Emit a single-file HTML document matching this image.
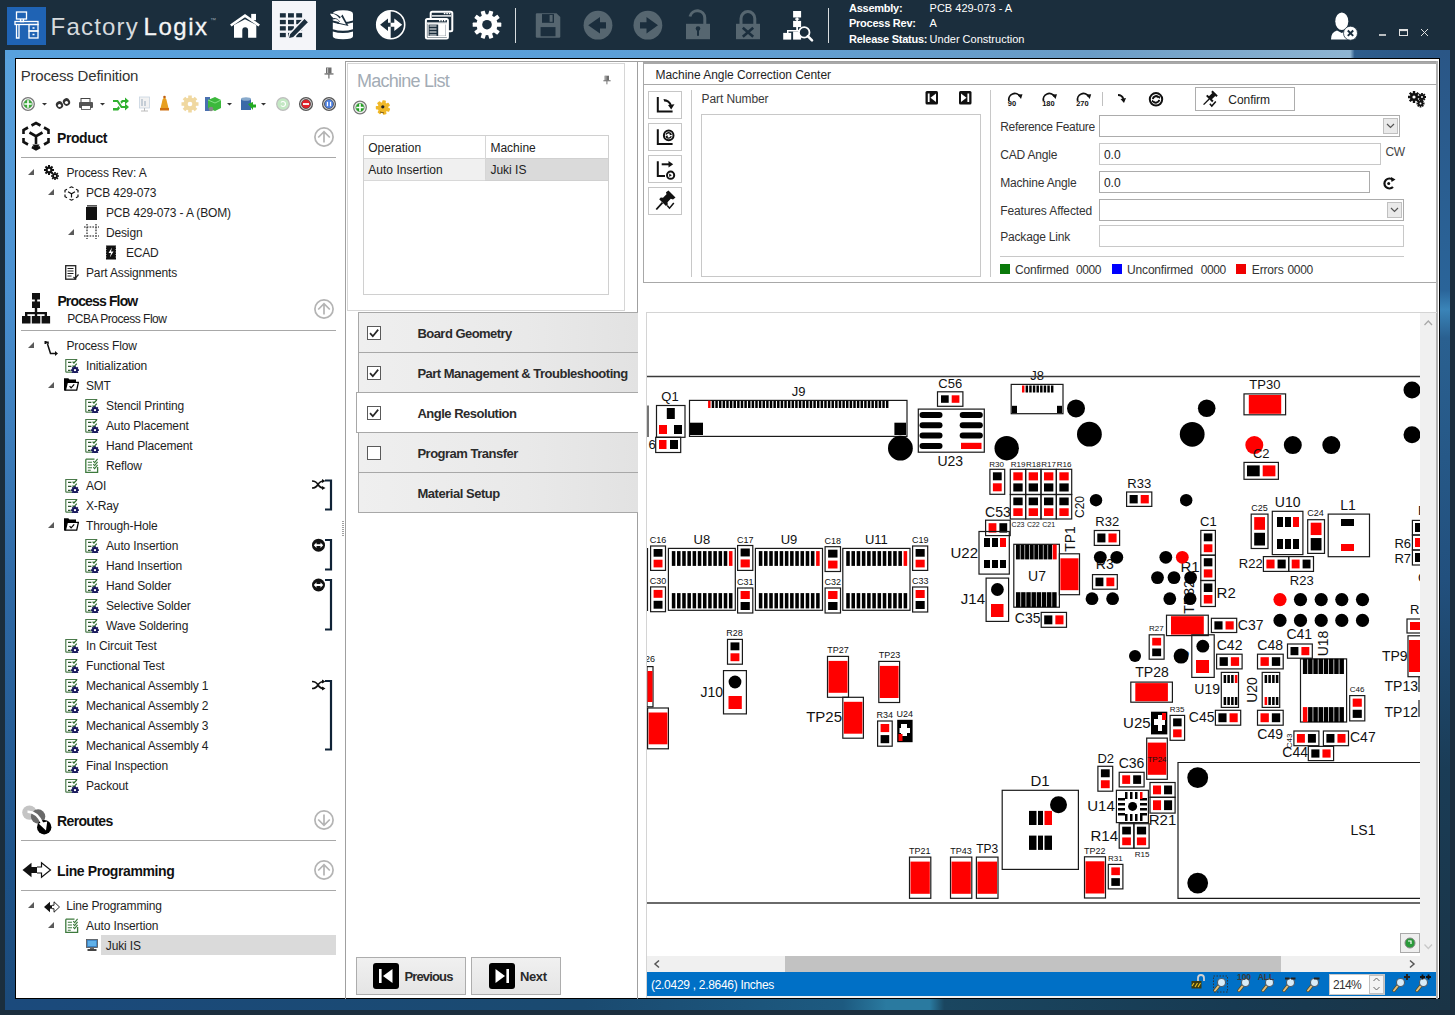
<!DOCTYPE html>
<html><head><meta charset="utf-8"><title>FactoryLogix</title>
<style>
*{margin:0;padding:0;box-sizing:content-box}
html,body{width:1455px;height:1015px;overflow:hidden}
body{background:#1b2e3d;position:relative;font-family:"Liberation Sans",sans-serif;color:#000}
.a{position:absolute}
.t{position:absolute;white-space:nowrap}
svg.a{overflow:visible}
</style></head><body>
<svg width="0" height="0" style="position:absolute">
<defs>
<symbol id="step" viewBox="0 0 14 15">
<path d="M0.8 14.2 V1.5 H12.3 M0.8 14.2 H7" fill="none" stroke="#4a7a4a" stroke-width="1.2"/>
<path d="M3 4.4h3.4M3 8.4h3.4M3 12.4h2.6" stroke="#2e5a2e" stroke-width="1.2"/>
<path d="M7.6 3.6 L8.9 5 L11.8 1.8 M7.6 7.5 L8.9 8.9 L11.8 5.7" fill="none" stroke="#2e6a2e" stroke-width="1.2"/>
<g transform="translate(10 12.1)" fill="#14145a"><rect x="-0.9" y="-3.9" width="1.8" height="2" transform="rotate(0)"/><rect x="-0.9" y="-3.9" width="1.8" height="2" transform="rotate(45)"/><rect x="-0.9" y="-3.9" width="1.8" height="2" transform="rotate(90)"/><rect x="-0.9" y="-3.9" width="1.8" height="2" transform="rotate(135)"/><rect x="-0.9" y="-3.9" width="1.8" height="2" transform="rotate(180)"/><rect x="-0.9" y="-3.9" width="1.8" height="2" transform="rotate(225)"/><rect x="-0.9" y="-3.9" width="1.8" height="2" transform="rotate(270)"/><rect x="-0.9" y="-3.9" width="1.8" height="2" transform="rotate(315)"/><circle r="2.8"/></g><circle cx="10" cy="12.1" r="1.2" fill="#fff"/>
</symbol>
<symbol id="stepng" viewBox="0 0 14 15">
<path d="M0.8 1.2 H9.5 M0.8 1.2 V14.3 H12.6 V9" fill="none" stroke="#3d7a3d" stroke-width="1.3"/>
<path d="M2.8 4.2h4.2M2.8 7h4.2M2.8 9.8h4.2M2.8 12.3h3" stroke="#3d7a3d" stroke-width="1.1"/>
<path d="M8.2 3.2 L9.6 4.6 L12.6 0.8 M8.2 6.2 L9.6 7.6 L12.6 3.8 M8.2 9.2 L9.6 10.6 L12.6 6.8" fill="none" stroke="#3d7a3d" stroke-width="1.1"/>
</symbol>
<symbol id="tri" viewBox="0 0 6 6"><path d="M6 0 V6 H0Z" fill="#5a5a5a"/></symbol>
<symbol id="gears" viewBox="0 0 15 15">
<g transform="translate(5 5)" fill="#111"><circle r="3.4"/><path d="M-1 -5h2v10h-2zM-5 -1h10v2h-10z"/><path d="M-1 -5h2v10h-2zM-5 -1h10v2h-10z" transform="rotate(45)"/></g>
<circle cx="5" cy="5" r="1.3" fill="#fff"/>
<g transform="translate(11 11)" fill="#111"><circle r="2.6"/><path d="M-0.8 -4h1.6v8h-1.6zM-4 -0.8h8v1.6h-8z"/><path d="M-0.8 -4h1.6v8h-1.6zM-4 -0.8h8v1.6h-8z" transform="rotate(45)"/></g>
<circle cx="11" cy="11" r="1.1" fill="#fff"/>
</symbol>
<symbol id="cube" viewBox="0 0 15 15">
<g fill="none" stroke="#111" stroke-width="1.2">
<path d="M5.5 1.8 L7.5 0.8 L9.5 1.8 M12 3.2 L14 4.3 V6.5 M14 8.5 V10.7 L12 11.8 M9.5 13.2 L7.5 14.2 L5.5 13.2 M3 11.8 L1 10.7 V8.5 M1 6.5 V4.3 L3 3.2"/>
<path d="M4 5.8 L7.5 7.7 L11 5.8 M7.5 7.7 V11.5"/>
</g></symbol>
<symbol id="book" viewBox="0 0 11 15"><rect x="0" y="2" width="11" height="13" fill="#111"/><rect x="1" y="0.3" width="10" height="1.2" fill="#111"/></symbol>
<symbol id="design" viewBox="0 0 15 15">
<g stroke="#111" stroke-width="1.1" fill="none" stroke-dasharray="1.6 1.2">
<path d="M3 0 V15 M12 0 V15 M0 3 H15 M0 12 H15"/></g></symbol>
<symbol id="ecad" viewBox="0 0 12 15">
<rect x="1" y="0.5" width="10" height="14" fill="#111"/>
<path d="M0 2h1.5M0 4.5h1.5M0 7h1.5M0 9.5h1.5M0 12h1.5M10.5 2h1.5M10.5 4.5h1.5M10.5 7h1.5M10.5 9.5h1.5M10.5 12h1.5" stroke="#fff" stroke-width="0.8"/>
<path d="M7 2.5 L3.5 8 H6 L4.8 12.5 L8.5 6.5 H6Z" fill="#fff"/></symbol>
<symbol id="passign" viewBox="0 0 14 15">
<rect x="0.7" y="0.7" width="10" height="13.5" fill="#fff" stroke="#222" stroke-width="1.3"/>
<path d="M2.5 3.5h6M2.5 6h6M2.5 8.5h6M2.5 11h4" stroke="#222" stroke-width="1.2"/>
<path d="M8.5 12 L10 13.5 L13.5 9.5" fill="none" stroke="#222" stroke-width="1.2"/></symbol>
<symbol id="pflow" viewBox="0 0 15 15">
<path d="M1 1.2 H4 V3 M3.5 3 L6.5 12.5 H12" fill="none" stroke="#111" stroke-width="1.5"/>
<path d="M11 10 L14 12.5 L11 15Z" fill="#111"/>
<rect x="0.5" y="0" width="2" height="3" fill="#111"/></symbol>
<symbol id="folder" viewBox="0 0 15 13">
<path d="M0 0.3 H4.3 L5.5 1.6 H12 V4.2 H3.2 L1.7 12.4 H0Z" fill="#000"/>
<path d="M3.3 4.3 H14.4 L12.7 12.2 H1.4Z" fill="#fff" stroke="#000" stroke-width="1.3"/>
<path d="M5.6 8.2 L7.1 9.9 L10.2 6.4" fill="none" stroke="#000" stroke-width="1.2"/>
</symbol>
<symbol id="lpi" viewBox="0 0 16 12">
<path d="M0 6 L6 0.8 V11.2Z" fill="#111"/><rect x="5" y="4.3" width="3" height="3.4" fill="#111"/>
<path d="M8 4.3 H10 V0.8 L15.5 6 L10 11.2 V7.7 H8" fill="#fff" stroke="#111" stroke-width="0.9"/></symbol>
<symbol id="comp" viewBox="0 0 12 12">
<rect x="0.5" y="0.5" width="11" height="8" fill="#3a7fc0" stroke="#555" stroke-width="0.8"/>
<rect x="1.8" y="1.8" width="8.4" height="5.2" fill="#5fb0e8"/>
<rect x="4" y="8.5" width="4" height="1.5" fill="#666"/><rect x="1.5" y="10" width="9" height="2" fill="#444"/></symbol>
<symbol id="upc" viewBox="0 0 20 20">
<circle cx="10" cy="10" r="9.1" fill="none" stroke="#b4b4b4" stroke-width="1.7"/>
<path d="M10 4.6 V15.6 M4.2 10.5 L10 4.6 L15.8 10.5" fill="none" stroke="#b4b4b4" stroke-width="1.7"/></symbol>
<symbol id="dnc" viewBox="0 0 20 20">
<circle cx="10" cy="10" r="9.1" fill="none" stroke="#b4b4b4" stroke-width="1.7"/>
<path d="M10 4.4 V15.4 M4.2 9.5 L10 15.4 L15.8 9.5" fill="none" stroke="#b4b4b4" stroke-width="1.7"/></symbol>
<symbol id="pin" viewBox="0 0 10 12">
<rect x="2" y="0.5" width="5.5" height="6" fill="#6e6e6e"/><rect x="3" y="1" width="1.2" height="5" fill="#bbb"/>
<rect x="0.5" y="6.3" width="9" height="1.3" fill="#6e6e6e"/><rect x="4.3" y="7" width="1.2" height="4.5" fill="#6e6e6e"/></symbol>
</defs></svg>

<div class="a" style="left:7px;top:7px;width:39px;height:38px;background:#1f63b4"></div>
<svg class="a" style="left:7px;top:7px" width="39" height="38" viewBox="0 0 39 38">
<g fill="none" stroke="#fff" stroke-width="1.3">
<rect x="9.5" y="5" width="10" height="7"/><path d="M13.5 12v2.5h3V12"/>
<rect x="8" y="14.5" width="23" height="3"/>
<path d="M9.5 17.5v13.5h2.5V17.5"/>
<rect x="22" y="17.5" width="9" height="6.5"/><rect x="22" y="24" width="9" height="7"/>
<path d="M25.5 21h2M25.5 27.5h2"/>
</g></svg>
<div class="t" style="left:50.60px;top:14.68px;font-size:24px;line-height:24px;color:#d6dadd;letter-spacing:1.198px;">Factory</div>
<div class="t" style="left:143.60px;top:14.68px;font-size:24px;line-height:24px;color:#f4f5f6;letter-spacing:1.525px;-webkit-text-stroke:0.3px #f4f5f6;">Logix</div>
<div class="t" style="left:210.00px;top:16.92px;font-size:6px;line-height:6px;color:#9aa5ad;">™</div>
<div class="a" style="left:272px;top:1px;width:44px;height:49px;background:#f4f5f9"></div>
<svg class="a" style="left:0;top:0" width="840" height="50" viewBox="0 0 840 50">
<!-- home -->
<path d="M230.8 25.5 L245 15.6 L259.2 25.5" fill="none" stroke="#ffffff" stroke-width="2.6"/>
<path d="M234 37.7 V25 L245 19.3 L256.3 25 V37.7 H248.1 V30.2 A2.9 2.9 0 0 0 242.3 30.2 V37.7Z" fill="#ffffff"/>
<rect x="251.2" y="13.9" width="4.8" height="6.3" fill="#ffffff"/>
<!-- grid pencil -->
<g fill="#1b2e3d">
<rect x="279.9" y="13.2" width="5.9" height="4.3"/><rect x="288" y="13.2" width="5.9" height="4.3"/><rect x="296.2" y="13.2" width="5.9" height="4.3"/>
<rect x="279.9" y="19.9" width="5.9" height="4.3"/><rect x="288" y="19.9" width="5.9" height="4.3"/><rect x="296.2" y="19.9" width="5.9" height="4.3"/>
<rect x="279.9" y="26.2" width="5.9" height="4.3"/><rect x="288" y="26.2" width="5.9" height="4.3"/><rect x="296.2" y="26.2" width="5.9" height="4.3"/>
<rect x="279.9" y="32.9" width="5.9" height="4.3"/><rect x="288" y="32.9" width="5.9" height="4.3"/><rect x="296.2" y="32.9" width="5.9" height="4.3"/>
</g>
<path d="M304.5 18 L308.8 22.3 L293.5 37.6 L288.2 39 L289.6 33.7Z" fill="#1b2e3d" stroke="#f4f5f9" stroke-width="1.3"/>
<!-- database -->
<g fill="#ffffff">
<path d="M332.8 14 Q332.8 10.3 343 10.3 Q353 10.3 353 14 V20.5 Q343 23.5 332.8 20.5Z"/>
<path d="M332.8 22.6 Q343 25.6 353 22.6 V29.3 Q343 32.3 332.8 29.3Z"/>
<path d="M332.8 31.4 Q343 34.4 353 31.4 V36.3 Q353 39.3 343 39.3 Q332.8 39.3 332.8 36.3Z"/>
</g>
<path d="M328.5 13.5 Q336 12 340.5 17 L342.5 14.5 L348.5 26 L337 23.5 L339.5 21.5 Q336.5 18 333 19.5 Q330 17 328.5 13.5Z" fill="#1b2e3d"/>
<path d="M330 13.8 Q336 13 339.5 18.5 L341.5 16.5 L346 24.5 L338.5 22.8 L340 21.5 Q336.5 17.5 333.5 18.2 Q331 16.5 330 13.8Z" fill="#ffffff"/>
<!-- circle arrows -->
<circle cx="390.7" cy="24.7" r="14" fill="none" stroke="#ffffff" stroke-width="1.6"/>
<path d="M390.7 10.7 A14 14 0 0 0 390.7 38.7Z" fill="#ffffff"/>
<path d="M380.1 24.7 L388 18.5 V22.8 H390.7 V26.7 H388 V31Z" fill="#1b2e3d"/>
<path d="M402.2 24.7 L394.3 18.5 V22.8 H390.7 V26.7 H394.3 V31Z" fill="#ffffff"/>
<!-- windows -->
<rect x="430.7" y="11.8" width="21.6" height="19.4" rx="1.5" fill="#1b2e3d" stroke="#ffffff" stroke-width="2"/>
<rect x="432" y="15.2" width="19" height="1.4" fill="#ffffff"/>
<rect x="443.8" y="12.8" width="1.6" height="1.4" fill="#ffffff"/><rect x="446.3" y="12.8" width="1.6" height="1.4" fill="#ffffff"/><rect x="448.8" y="12.8" width="1.6" height="1.4" fill="#ffffff"/>
<rect x="425.9" y="19" width="22" height="19.4" rx="1.5" fill="#1b2e3d" stroke="#ffffff" stroke-width="2"/>
<rect x="427" y="22.4" width="20" height="1.4" fill="#ffffff"/>
<rect x="439" y="20" width="1.6" height="1.4" fill="#ffffff"/><rect x="441.5" y="20" width="1.6" height="1.4" fill="#ffffff"/><rect x="444" y="20" width="1.6" height="1.4" fill="#ffffff"/>
<rect x="428" y="24" width="18.5" height="12.5" fill="none" stroke="#ffffff" stroke-width="1.2"/>
<path d="M429.5 26h7M429.5 29h7M429.5 32h7M429.5 35h7" stroke="#ffffff" stroke-width="1.1"/>
<rect x="438.2" y="24" width="7.5" height="11.8" fill="#ffffff"/>
<!-- gear -->
<g transform="translate(487 24.7)" fill="#ffffff"><rect x="-2.1" y="-14.3" width="4.2" height="6" rx="0.6" transform="rotate(90)"/><rect x="-2.1" y="-14.3" width="4.2" height="6" rx="0.6" transform="rotate(126)"/><rect x="-2.1" y="-14.3" width="4.2" height="6" rx="0.6" transform="rotate(162)"/><rect x="-2.1" y="-14.3" width="4.2" height="6" rx="0.6" transform="rotate(198)"/><rect x="-2.1" y="-14.3" width="4.2" height="6" rx="0.6" transform="rotate(234)"/><rect x="-2.1" y="-14.3" width="4.2" height="6" rx="0.6" transform="rotate(270)"/><rect x="-2.1" y="-14.3" width="4.2" height="6" rx="0.6" transform="rotate(306)"/><rect x="-2.1" y="-14.3" width="4.2" height="6" rx="0.6" transform="rotate(342)"/><rect x="-2.1" y="-14.3" width="4.2" height="6" rx="0.6" transform="rotate(378)"/><rect x="-2.1" y="-14.3" width="4.2" height="6" rx="0.6" transform="rotate(414)"/><circle r="10.5"/></g>
<circle cx="487" cy="24.7" r="4.8" fill="#1b2e3d"/>
<rect x="515" y="8" width="1" height="35" fill="#d8dcdf"/>
<!-- save -->
<path d="M536.5 13.2 H556.5 L560.3 17 V36.5 Q560.3 37.7 559 37.7 H537 Q535.8 37.7 535.8 36.5 V14 Z" fill="#566670"/>
<rect x="542" y="14.1" width="12" height="8.7" fill="#1b2e3d"/><rect x="549.6" y="15" width="3" height="6.8" fill="#566670"/>
<rect x="540.6" y="27.1" width="14.9" height="9.2" fill="#1b2e3d"/>
<!-- arrows -->
<circle cx="598" cy="25.2" r="14.4" fill="#566670"/>
<path d="M588.2 25.2 L600 17 V22.3 H606 V28.6 H600 V33.4Z" fill="#1b2e3d"/>
<circle cx="647.9" cy="25.2" r="14.4" fill="#566670"/>
<path d="M658 25.2 L646.5 17 V22.3 H640 V28.6 H646.5 V33.4Z" fill="#1b2e3d"/>
<!-- unlock -->
<path d="M690 16.5 A7.5 7.5 0 0 1 704.8 18 V24" fill="none" stroke="#566670" stroke-width="3"/>
<rect x="686" y="23.8" width="24" height="15.4" fill="#566670"/>
<circle cx="698" cy="28.6" r="2.3" fill="#1b2e3d"/><rect x="697" y="29" width="2" height="6.8" fill="#1b2e3d"/>
<!-- lock x -->
<path d="M741 24 V18.5 A6.9 6.9 0 0 1 754.8 18.5 V24" fill="none" stroke="#566670" stroke-width="3"/>
<rect x="736" y="23.8" width="24" height="15.4" fill="#566670"/>
<path d="M742.8 27.8 L753.2 36.8 M753.2 27.8 L742.8 36.8" stroke="#1b2e3d" stroke-width="2.6"/>
<!-- hierarchy magnifier -->
<g fill="#ffffff">
<rect x="793.1" y="11" width="8" height="6.5"/><rect x="796.2" y="17.5" width="1.8" height="3.4"/><rect x="795" y="18.5" width="4.2" height="1.2"/>
<rect x="793.1" y="20.9" width="8" height="6.2"/><rect x="796.2" y="27" width="1.8" height="4"/>
<rect x="787" y="30" width="13" height="1.5"/><rect x="787" y="30" width="1.5" height="3"/>
<rect x="783.2" y="32.9" width="8" height="6.7"/><rect x="793.1" y="31.5" width="8" height="8.1"/>
</g>
<circle cx="804.2" cy="32.4" r="5.3" fill="#1b2e3d" stroke="#ffffff" stroke-width="1.8"/>
<path d="M807.8 36.2 L812 40.4" stroke="#ffffff" stroke-width="2.6" stroke-linecap="round"/>
<rect x="828" y="8" width="1" height="35" fill="#d8dcdf"/>
</svg>
<div class="t" style="left:849.00px;top:2.99px;font-size:11px;line-height:11px;font-weight:700;color:#fff;letter-spacing:-0.250px;">Assembly:</div>
<div class="t" style="left:849.00px;top:18.39px;font-size:11px;line-height:11px;font-weight:700;color:#fff;letter-spacing:-0.250px;">Process Rev:</div>
<div class="t" style="left:849.00px;top:33.79px;font-size:11px;line-height:11px;font-weight:700;color:#fff;letter-spacing:-0.250px;">Release Status:</div>
<div class="t" style="left:929.60px;top:2.99px;font-size:11px;line-height:11px;color:#fff;">PCB 429-073 - A</div>
<div class="t" style="left:929.60px;top:18.39px;font-size:11px;line-height:11px;color:#fff;">A</div>
<div class="t" style="left:929.60px;top:33.79px;font-size:11px;line-height:11px;color:#fff;">Under Construction</div>
<svg class="a" style="left:1320px;top:0" width="135" height="50" viewBox="1320 0 135 50">
<ellipse cx="1341.8" cy="21.3" rx="6.5" ry="8.8" fill="#fff"/>
<path d="M1331 39.5 Q1331 32 1337 30.5 L1341.8 33 L1346.5 30.5 Q1349 31.5 1350 33 V39.5Z" fill="#fff"/>
<circle cx="1350.5" cy="33.2" r="7" fill="#fff" stroke="#1b2e3d" stroke-width="0.8"/>
<path d="M1347.8 30.5 L1353.2 35.9 M1353.2 30.5 L1347.8 35.9" stroke="#1b2e3d" stroke-width="1.9"/>
<rect x="1379" y="34.2" width="7" height="1.6" fill="#e0e0e0"/>
<rect x="1399.5" y="29.5" width="8" height="6" fill="none" stroke="#e0e0e0" stroke-width="1"/>
<rect x="1399.5" y="29.5" width="8" height="1.6" fill="#e0e0e0"/>
<path d="M1421 29 L1428 36 M1428 29 L1421 36" stroke="#e0e0e0" stroke-width="1"/>
</svg>

<div class="a" style="left:5px;top:50px;width:1445px;height:960px;background:linear-gradient(180deg,#5aa3de 0%,#4a90d0 25%,#2f6aa6 55%,#1d5288 85%,#1b4a7a 100%)"></div>
<div class="a" style="left:5px;top:50px;width:1445px;height:9px;background:linear-gradient(90deg,#58a1dd 0%,#5b9fd8 40%,#6a9cc6 75%,#8fb5d2 93.1%,#2e5d8c 93.4%,#2a5585 100%)"></div>
<div class="a" style="left:5px;top:999px;width:1445px;height:11px;background:linear-gradient(90deg,#1b4a7c 0%,#1a4a70 40%,#1d5a80 58%,#2a7aa0 61%,#2a7aa0 64%,#1a4660 65%,#173a52 85%,#1a3446 100%)"></div>
<div class="a" style="left:1439px;top:50px;width:11px;height:960px;background:linear-gradient(180deg,#2a5686 0%,#2a6499 25%,#3a84b8 27%,#2a6090 30%,#22507e 55%,#1a3c56 75%,#1a3446 100%)"></div>
<div class="a" style="left:1450px;top:50px;width:5px;height:965px;background:#1b2e3d"></div>
<div class="a" style="left:5px;top:1010px;width:1450px;height:5px;background:#1b2e3d"></div>
<div class="a" style="left:15px;top:58px;width:1425px;height:941px;background:#fff;border:1px solid #000;box-sizing:border-box"></div>

<div class="t" style="left:20.70px;top:67.60px;font-size:15px;line-height:15px;color:#333;letter-spacing:-0.183px;">Process Definition</div>
<svg class="a" style="left:324px;top:67px" width="10" height="12"><use href="#pin"/></svg>
<svg class="a" style="left:16px;top:94px" width="330" height="20" viewBox="16 94 330 20">
<circle cx="28" cy="104" r="6.3" fill="#fff" stroke="#777" stroke-width="1.3"/><circle cx="28" cy="104" r="4.4" fill="#3aa83a" stroke="#9a9" stroke-width="0.6"/><path d="M28 100.3v7.4M24.3 104h7.4" stroke="#fff" stroke-width="1.6"/>
<path d="M42 103h5l-2.5 2.5z" fill="#333"/>
<g fill="#333"><ellipse cx="59.5" cy="105" rx="3.5" ry="3.8" transform="rotate(-30 59.5 105)"/><ellipse cx="66.5" cy="102" rx="3.5" ry="3.8" transform="rotate(-30 66.5 102)"/></g>
<g fill="#fff"><circle cx="59.5" cy="105.5" r="1.6"/><circle cx="66.5" cy="102.5" r="1.6"/></g>
<rect x="81" y="98.5" width="9" height="4" fill="#fff" stroke="#444" stroke-width="1"/><rect x="79" y="102" width="14" height="6" rx="1" fill="#555"/><rect x="81.5" y="105.5" width="9" height="4" fill="#fff" stroke="#444" stroke-width="0.8"/>
<path d="M100 103h5l-2.5 2.5z" fill="#333"/>
<path d="M113 100h5l4 6h3v-2.5l4 3.5-4 3.5v-2.5h-4l-4-6h-4zM113 108h4l1.5-2 1.5 2.2-1.8 2.3h-5.2zM122 100h3v-2.5l4 3.5-4 3.5v-2.5h-2l-1.3 1.8-1.4-2z" fill="#2fb02f"/>
<rect x="139.5" y="97" width="10" height="11" fill="#f2f2f2" stroke="#c8d4e0" stroke-width="0.8"/><path d="M142 99v7M145 101v5" stroke="#9ab" stroke-width="1"/><path d="M144.5 108v3M141 111h7" stroke="#bbb" stroke-width="1"/>
<path d="M164.5 98c2 0 2 2 2.5 4l1.5 6h-8l1.5-6c.5-2 .5-4 2.5-4z" fill="#e8a020"/><rect x="160" y="108" width="9" height="2.5" fill="#d07010"/><circle cx="164.5" cy="97" r="1.3" fill="#c06010"/>
<g transform="translate(190 104)"><circle r="6.5" fill="#f0d8a0"/><path d="M-1.8-8.5h3.6v17h-3.6zM-8.5-1.8h17v3.6h-17z" fill="#f0d8a0"/><path d="M-1.8-8.5h3.6v17h-3.6zM-8.5-1.8h17v3.6h-17z" fill="#f0d8a0" transform="rotate(45)"/><circle r="2.3" fill="#fff"/></g>
<rect x="205" y="97" width="5" height="14" fill="#4a70b0"/><path d="M208 100l7-3 6 3v8l-6 3-7-3z" fill="#3cb83c"/><path d="M208 100l7 3 6-3" fill="none" stroke="#9e9" stroke-width="0.8"/><circle cx="211" cy="109" r="2.3" fill="#888"/>
<path d="M227 103h5l-2.5 2.5z" fill="#333"/>
<path d="M241 99h10v11h-10z" fill="#3a6aa8"/><ellipse cx="246" cy="99" rx="5" ry="1.8" fill="#8ac"/><path d="M248 104l5-2v2.5h3v3h-3v2.5z" fill="#2a2"/>
<path d="M261 103h5l-2.5 2.5z" fill="#333"/>
<circle cx="283" cy="104" r="6.3" fill="#c4e8c4" stroke="#bdbdbd" stroke-width="1.2"/><path d="M281 102.5a2.5 2.5 0 1 1 0 3" fill="none" stroke="#fff" stroke-width="1.2"/>
<circle cx="306" cy="104" r="6.4" fill="#e8e8e8" stroke="#555" stroke-width="1.3"/><circle cx="306" cy="104" r="4.6" fill="#e0202a" stroke="#444" stroke-width="0.7"/><rect x="303" y="103.1" width="6" height="1.8" fill="#fff"/>
<circle cx="329" cy="104" r="6.4" fill="#e8e8e8" stroke="#555" stroke-width="1.3"/><circle cx="329" cy="104" r="4.6" fill="#4a7ee0" stroke="#444" stroke-width="0.7"/><rect x="326.8" y="101.8" width="1.3" height="4.4" fill="#fff"/><rect x="329.9" y="101.8" width="1.3" height="4.4" fill="#fff"/>
</svg>
<svg class="a" style="left:22px;top:121px" width="30" height="31" viewBox="0 0 30 31">
<g fill="none" stroke="#111" stroke-width="2.6">
<path d="M9.5 4.5 L14 2 L18.5 4.5 M22 6.5 L26.5 9 V13 M26.5 17 V21 L22 23.5 M18 26 L14 28.2 L10 26 M6 23.5 L1.5 21 V17 M1.5 13 V9 L6 6.5"/>
<path d="M7.5 11.5 L14 15.2 L20.5 11.5 M14 15.2 V23"/></g>
<path d="M10.5 23.5 L14 29 L17.5 23.5Z" fill="#111"/>
</svg>
<div class="t" style="left:57.00px;top:130.55px;font-size:14px;line-height:14px;font-weight:700;color:#111;letter-spacing:-0.413px;">Product</div>
<svg class="a" style="left:314px;top:127px" width="20" height="20"><use href="#upc"/></svg>
<div class="a" style="left:21px;top:157px;width:315px;height:1px;background:#a8a8a8"></div>
<svg class="a" style="left:22px;top:293px" width="30" height="32" viewBox="0 0 30 32">
<g fill="#111"><rect x="10" y="0" width="8" height="6.5"/><rect x="12.8" y="6" width="2.4" height="3"/>
<rect x="10" y="8.5" width="8" height="6.5"/><rect x="12.8" y="14.5" width="2.4" height="5"/>
<rect x="3" y="19" width="22" height="2.2"/><rect x="3" y="19" width="2.4" height="4"/><rect x="12.8" y="19" width="2.4" height="4"/><rect x="22.6" y="19" width="2.4" height="4"/>
<rect x="0" y="23" width="8.5" height="7.5"/><rect x="9.8" y="23" width="8.5" height="7.5"/><rect x="19.6" y="23" width="8.5" height="7.5"/></g>
</svg>
<div class="t" style="left:57.40px;top:293.55px;font-size:14px;line-height:14px;font-weight:700;color:#111;letter-spacing:-0.855px;">Process Flow</div>
<div class="t" style="left:67.20px;top:312.64px;font-size:12px;line-height:12px;color:#1e1e1e;letter-spacing:-0.475px;">PCBA Process Flow</div>
<svg class="a" style="left:314px;top:299px" width="20" height="20"><use href="#upc"/></svg>
<div class="a" style="left:21px;top:330px;width:315px;height:1px;background:#a8a8a8"></div>
<div class="a" style="left:101px;top:935px;width:235px;height:20px;background:#dadada"></div>
<div class="t" style="left:66.50px;top:166.84px;font-size:12px;line-height:12px;color:#1e1e1e;letter-spacing:-0.146px;">Process Rev: A</div>
<svg class="a" style="left:43.5px;top:164.8px" width="15" height="15"><use href="#gears"/></svg>
<svg class="a" style="left:27.6px;top:168.7px" width="6" height="6"><use href="#tri"/></svg>
<div class="t" style="left:86.00px;top:186.84px;font-size:12px;line-height:12px;color:#1e1e1e;letter-spacing:-0.164px;">PCB 429-073</div>
<svg class="a" style="left:64px;top:185.5px" width="15" height="15"><use href="#cube"/></svg>
<svg class="a" style="left:47.6px;top:188.7px" width="6" height="6"><use href="#tri"/></svg>
<div class="t" style="left:106.00px;top:206.84px;font-size:12px;line-height:12px;color:#1e1e1e;letter-spacing:-0.152px;">PCB 429-073 - A (BOM)</div>
<svg class="a" style="left:86px;top:205px" width="11" height="15"><use href="#book"/></svg>
<div class="t" style="left:106.00px;top:226.84px;font-size:12px;line-height:12px;color:#1e1e1e;letter-spacing:-0.156px;">Design</div>
<svg class="a" style="left:84px;top:224px" width="15" height="15"><use href="#design"/></svg>
<svg class="a" style="left:67.6px;top:228.7px" width="6" height="6"><use href="#tri"/></svg>
<div class="t" style="left:126.00px;top:246.84px;font-size:12px;line-height:12px;color:#1e1e1e;letter-spacing:-0.208px;">ECAD</div>
<svg class="a" style="left:105px;top:245px" width="12" height="15"><use href="#ecad"/></svg>
<div class="t" style="left:86.00px;top:266.84px;font-size:12px;line-height:12px;color:#1e1e1e;letter-spacing:-0.146px;">Part Assignments</div>
<svg class="a" style="left:65px;top:265px" width="14" height="15"><use href="#passign"/></svg>
<div class="t" style="left:66.50px;top:339.84px;font-size:12px;line-height:12px;color:#1e1e1e;letter-spacing:-0.150px;">Process Flow</div>
<svg class="a" style="left:44px;top:341px" width="15" height="15"><use href="#pflow"/></svg>
<svg class="a" style="left:27.6px;top:341.7px" width="6" height="6"><use href="#tri"/></svg>
<div class="t" style="left:86.00px;top:359.84px;font-size:12px;line-height:12px;color:#1e1e1e;letter-spacing:-0.112px;">Initialization</div>
<svg class="a" style="left:65px;top:358px" width="14" height="15"><use href="#step"/></svg>
<div class="t" style="left:86.00px;top:379.84px;font-size:12px;line-height:12px;color:#1e1e1e;letter-spacing:-0.211px;">SMT</div>
<svg class="a" style="left:64px;top:378px" width="15" height="13"><use href="#folder"/></svg>
<svg class="a" style="left:47.6px;top:381.7px" width="6" height="6"><use href="#tri"/></svg>
<div class="t" style="left:106.00px;top:399.84px;font-size:12px;line-height:12px;color:#1e1e1e;letter-spacing:-0.125px;">Stencil Printing</div>
<svg class="a" style="left:85px;top:398px" width="14" height="15"><use href="#step"/></svg>
<div class="t" style="left:106.00px;top:419.84px;font-size:12px;line-height:12px;color:#1e1e1e;letter-spacing:-0.151px;">Auto Placement</div>
<svg class="a" style="left:85px;top:418px" width="14" height="15"><use href="#step"/></svg>
<div class="t" style="left:106.00px;top:439.84px;font-size:12px;line-height:12px;color:#1e1e1e;letter-spacing:-0.158px;">Hand Placement</div>
<svg class="a" style="left:85px;top:438px" width="14" height="15"><use href="#step"/></svg>
<div class="t" style="left:106.00px;top:459.84px;font-size:12px;line-height:12px;color:#1e1e1e;letter-spacing:-0.153px;">Reflow</div>
<svg class="a" style="left:85px;top:458px" width="14" height="15"><use href="#stepng"/></svg>
<div class="t" style="left:86.00px;top:479.84px;font-size:12px;line-height:12px;color:#1e1e1e;letter-spacing:-0.172px;">AOI</div>
<svg class="a" style="left:65px;top:478px" width="14" height="15"><use href="#step"/></svg>
<div class="t" style="left:86.00px;top:499.84px;font-size:12px;line-height:12px;color:#1e1e1e;letter-spacing:-0.167px;">X-Ray</div>
<svg class="a" style="left:65px;top:498px" width="14" height="15"><use href="#step"/></svg>
<div class="t" style="left:86.00px;top:519.84px;font-size:12px;line-height:12px;color:#1e1e1e;letter-spacing:-0.153px;">Through-Hole</div>
<svg class="a" style="left:64px;top:518px" width="15" height="13"><use href="#folder"/></svg>
<svg class="a" style="left:47.6px;top:521.7px" width="6" height="6"><use href="#tri"/></svg>
<div class="t" style="left:106.00px;top:539.84px;font-size:12px;line-height:12px;color:#1e1e1e;letter-spacing:-0.132px;">Auto Insertion</div>
<svg class="a" style="left:85px;top:538px" width="14" height="15"><use href="#step"/></svg>
<div class="t" style="left:106.00px;top:559.84px;font-size:12px;line-height:12px;color:#1e1e1e;letter-spacing:-0.139px;">Hand Insertion</div>
<svg class="a" style="left:85px;top:558px" width="14" height="15"><use href="#step"/></svg>
<div class="t" style="left:106.00px;top:579.84px;font-size:12px;line-height:12px;color:#1e1e1e;letter-spacing:-0.152px;">Hand Solder</div>
<svg class="a" style="left:85px;top:578px" width="14" height="15"><use href="#step"/></svg>
<div class="t" style="left:106.00px;top:599.84px;font-size:12px;line-height:12px;color:#1e1e1e;letter-spacing:-0.135px;">Selective Solder</div>
<svg class="a" style="left:85px;top:598px" width="14" height="15"><use href="#step"/></svg>
<div class="t" style="left:106.00px;top:619.84px;font-size:12px;line-height:12px;color:#1e1e1e;letter-spacing:-0.150px;">Wave Soldering</div>
<svg class="a" style="left:85px;top:618px" width="14" height="15"><use href="#step"/></svg>
<div class="t" style="left:86.00px;top:639.84px;font-size:12px;line-height:12px;color:#1e1e1e;letter-spacing:-0.121px;">In Circuit Test</div>
<svg class="a" style="left:65px;top:638px" width="14" height="15"><use href="#step"/></svg>
<div class="t" style="left:86.00px;top:659.84px;font-size:12px;line-height:12px;color:#1e1e1e;letter-spacing:-0.134px;">Functional Test</div>
<svg class="a" style="left:65px;top:658px" width="14" height="15"><use href="#step"/></svg>
<div class="t" style="left:86.00px;top:679.84px;font-size:12px;line-height:12px;color:#1e1e1e;letter-spacing:-0.149px;">Mechanical Assembly 1</div>
<svg class="a" style="left:65px;top:678px" width="14" height="15"><use href="#step"/></svg>
<div class="t" style="left:86.00px;top:699.84px;font-size:12px;line-height:12px;color:#1e1e1e;letter-spacing:-0.149px;">Mechanical Assembly 2</div>
<svg class="a" style="left:65px;top:698px" width="14" height="15"><use href="#step"/></svg>
<div class="t" style="left:86.00px;top:719.84px;font-size:12px;line-height:12px;color:#1e1e1e;letter-spacing:-0.149px;">Mechanical Assembly 3</div>
<svg class="a" style="left:65px;top:718px" width="14" height="15"><use href="#step"/></svg>
<div class="t" style="left:86.00px;top:739.84px;font-size:12px;line-height:12px;color:#1e1e1e;letter-spacing:-0.149px;">Mechanical Assembly 4</div>
<svg class="a" style="left:65px;top:738px" width="14" height="15"><use href="#step"/></svg>
<div class="t" style="left:86.00px;top:759.84px;font-size:12px;line-height:12px;color:#1e1e1e;letter-spacing:-0.131px;">Final Inspection</div>
<svg class="a" style="left:65px;top:758px" width="14" height="15"><use href="#step"/></svg>
<div class="t" style="left:86.00px;top:779.84px;font-size:12px;line-height:12px;color:#1e1e1e;letter-spacing:-0.155px;">Packout</div>
<svg class="a" style="left:65px;top:778px" width="14" height="15"><use href="#step"/></svg>
<div class="t" style="left:66.20px;top:899.84px;font-size:12px;line-height:12px;color:#1e1e1e;letter-spacing:-0.153px;">Line Programming</div>
<svg class="a" style="left:44px;top:901px" width="16" height="12"><use href="#lpi"/></svg>
<svg class="a" style="left:27.6px;top:901.7px" width="6" height="6"><use href="#tri"/></svg>
<div class="t" style="left:86.10px;top:919.84px;font-size:12px;line-height:12px;color:#1e1e1e;letter-spacing:-0.132px;">Auto Insertion</div>
<svg class="a" style="left:65px;top:918px" width="14" height="15"><use href="#stepng"/></svg>
<svg class="a" style="left:47.6px;top:921.7px" width="6" height="6"><use href="#tri"/></svg>
<div class="t" style="left:105.80px;top:939.84px;font-size:12px;line-height:12px;color:#1e1e1e;letter-spacing:-0.129px;">Juki IS</div>
<svg class="a" style="left:86px;top:939px" width="12" height="12"><use href="#comp"/></svg>
<svg class="a" style="left:300px;top:470px" width="40" height="290" viewBox="300 470 40 290">
<g fill="none" stroke="#0f2236" stroke-width="2.2">
<path d="M325 480.5 H331 V509.5 H325"/>
<path d="M325 540 H331 V569.5 H325"/>
<path d="M325 580 H331 V629.5 H325"/>
<path d="M325 681 H331 V749.5 H325"/>
</g>
<g fill="none" stroke="#111" stroke-width="1.6">
<path d="M312 481 Q316 481 318 484.5 Q320 488 324 488 M312 488 Q316 488 318 484.5 Q320 481 324 481"/>
<path d="M312 681.5 Q316 681.5 318 685 Q320 688.5 324 688.5 M312 688.5 Q316 688.5 318 685 Q320 681.5 324 681.5"/>
</g>
<path d="M322 479 L325.5 481 L322 483Z M322 486 L325.5 488 L322 490Z M322 679.5 L325.5 681.5 L322 683.5Z M322 686.5 L325.5 688.5 L322 690.5Z" fill="#111"/>
<circle cx="318.5" cy="545.2" r="6.5" fill="#111"/><path d="M313.8 545.2 L316.5 542.5 V544.3 H320.5 V542.5 L323.2 545.2 L320.5 547.9 V546.1 H316.5 V547.9Z" fill="#fff"/>
<circle cx="318.5" cy="585" r="6.5" fill="#111"/><path d="M313.8 585 L316.5 582.3 V584.1 H320.5 V582.3 L323.2 585 L320.5 587.7 V585.9 H316.5 V587.7Z" fill="#fff"/>
</svg>
<div class="a" style="left:342px;top:521px;width:2px;height:1px;background:#a0a0a0"></div>
<div class="a" style="left:342px;top:523px;width:2px;height:1px;background:#a0a0a0"></div>
<div class="a" style="left:342px;top:525px;width:2px;height:1px;background:#a0a0a0"></div>
<div class="a" style="left:342px;top:527px;width:2px;height:1px;background:#a0a0a0"></div>
<div class="a" style="left:342px;top:529px;width:2px;height:1px;background:#a0a0a0"></div>
<div class="a" style="left:342px;top:531px;width:2px;height:1px;background:#a0a0a0"></div>
<div class="a" style="left:342px;top:533px;width:2px;height:1px;background:#a0a0a0"></div>
<div class="a" style="left:342px;top:535px;width:2px;height:1px;background:#a0a0a0"></div>
<svg class="a" style="left:18px;top:800px" width="40" height="40" viewBox="18 800 40 40">
<circle cx="29.4" cy="812.6" r="7.2" fill="#c4c4c4"/><circle cx="38.1" cy="816.5" r="7.2" fill="#6a6a6a"/>
<circle cx="44.2" cy="827.2" r="7.2" fill="#000"/>
<path d="M27.5 811.8 Q37 811.5 42.5 824" fill="none" stroke="#fff" stroke-width="2.6"/>
<path d="M38.5 823.5 L46 830.5 L47.2 821.5Z" fill="#fff"/>
</svg>
<div class="t" style="left:57.00px;top:813.95px;font-size:14px;line-height:14px;font-weight:700;color:#111;letter-spacing:-0.635px;">Reroutes</div>
<svg class="a" style="left:314px;top:810px" width="20" height="20"><use href="#dnc"/></svg>
<div class="a" style="left:21px;top:840px;width:315px;height:1px;background:#a8a8a8"></div>
<svg class="a" style="left:22px;top:862px" width="30" height="16" viewBox="0 0 30 16">
<path d="M0.5 8 L9.5 0.8 V15.2Z" fill="#111"/><rect x="9" y="5" width="6" height="6" fill="#111"/>
<path d="M15 5 H19.5 V0.8 L28.5 8 L19.5 15.2 V11 H15" fill="#fff" stroke="#111" stroke-width="1.2"/>
</svg>
<div class="t" style="left:57.00px;top:864.45px;font-size:14px;line-height:14px;font-weight:700;color:#111;letter-spacing:-0.393px;">Line Programming</div>
<svg class="a" style="left:314px;top:860px" width="20" height="20"><use href="#upc"/></svg>
<div class="a" style="left:21px;top:890px;width:315px;height:1px;background:#a8a8a8"></div>
<div class="a" style="left:345px;top:61px;width:1px;height:938px;background:#a0a0a0"></div>

<div class="a" style="left:345px;top:61px;width:1093px;height:1px;background:#a0a0a0"></div>
<div class="a" style="left:637px;top:61px;width:1px;height:938px;background:#a0a0a0"></div>
<div class="a" style="left:347px;top:63px;width:278px;height:248px;border:1px solid #d6d6d6;box-sizing:border-box"></div>
<div class="t" style="left:357.00px;top:71.76px;font-size:18px;line-height:18px;color:#a3acb5;letter-spacing:-0.754px;">Machine List</div>
<svg class="a" style="left:603px;top:75px" width="8" height="10" viewBox="0 0 10 12"><use href="#pin"/></svg>
<svg class="a" style="left:352px;top:99px" width="40" height="18" viewBox="352 99 40 18">
<circle cx="360" cy="107.5" r="6.3" fill="#fff" stroke="#777" stroke-width="1.3"/><circle cx="360" cy="107.5" r="4.4" fill="#22a022" stroke="#9a9" stroke-width="0.6"/><path d="M360 103.8v7.4M356.3 107.5h7.4" stroke="#fff" stroke-width="1.6"/>
<g transform="translate(383 107.5) rotate(10)" fill="#f0b828"><rect x="-1.8" y="-7.2" width="3.6" height="3.5" rx="0.8" transform="rotate(0.0)"/><rect x="-1.8" y="-7.2" width="3.6" height="3.5" rx="0.8" transform="rotate(51.4)"/><rect x="-1.8" y="-7.2" width="3.6" height="3.5" rx="0.8" transform="rotate(102.9)"/><rect x="-1.8" y="-7.2" width="3.6" height="3.5" rx="0.8" transform="rotate(154.3)"/><rect x="-1.8" y="-7.2" width="3.6" height="3.5" rx="0.8" transform="rotate(205.7)"/><rect x="-1.8" y="-7.2" width="3.6" height="3.5" rx="0.8" transform="rotate(257.1)"/><rect x="-1.8" y="-7.2" width="3.6" height="3.5" rx="0.8" transform="rotate(308.6)"/><circle r="5.3"/></g><circle cx="382.8" cy="106.8" r="1.6" fill="#222"/><path d="M380 112 L384 113" stroke="#5a4010" stroke-width="0.8"/>
</svg>
<div class="a" style="left:363px;top:135px;width:246px;height:160px;border:1px solid #d0d0d0;box-sizing:border-box"></div>
<div class="a" style="left:364px;top:158px;width:121px;height:21px;background:#f0f0f0;border-top:1px solid #d8d8d8;border-bottom:1px solid #d8d8d8"></div>
<div class="a" style="left:485px;top:158px;width:123px;height:21px;background:#dadada;border-top:1px solid #d0d0d0;border-bottom:1px solid #d0d0d0"></div>
<div class="a" style="left:485px;top:136px;width:1px;height:43px;background:#d6d6d6"></div>
<div class="t" style="left:368.20px;top:141.94px;font-size:12px;line-height:12px;color:#222;letter-spacing:0.033px;">Operation</div>
<div class="t" style="left:490.40px;top:141.94px;font-size:12px;line-height:12px;color:#222;">Machine</div>
<div class="t" style="left:368.20px;top:163.64px;font-size:12px;line-height:12px;color:#222;letter-spacing:0.040px;">Auto Insertion</div>
<div class="t" style="left:490.40px;top:163.64px;font-size:12px;line-height:12px;color:#222;">Juki IS</div>
<div class="a" style="left:358px;top:312px;width:280px;height:41px;background:linear-gradient(90deg,#efefef,#e9e9e9 60%,#e2e2e2);border:1px solid #a8a8a8;border-right:none;box-sizing:border-box"></div>
<div class="a" style="left:367px;top:326px;width:14px;height:14px;background:#fff;border:1px solid #5a5a5a;box-sizing:border-box"></div>
<svg class="a" style="left:367px;top:326px" width="14" height="14"><path d="M3 7.2 L5.8 10.2 L11.2 3.6" fill="none" stroke="#262626" stroke-width="1.7"/></svg>
<div class="t" style="left:417.40px;top:326.90px;font-size:13px;line-height:13px;font-weight:700;color:#2b2b2b;letter-spacing:-0.531px;">Board Geometry</div>
<div class="a" style="left:358px;top:352px;width:280px;height:41px;background:linear-gradient(90deg,#efefef,#e9e9e9 60%,#e2e2e2);border:1px solid #a8a8a8;border-right:none;box-sizing:border-box"></div>
<div class="a" style="left:367px;top:366px;width:14px;height:14px;background:#fff;border:1px solid #5a5a5a;box-sizing:border-box"></div>
<svg class="a" style="left:367px;top:366px" width="14" height="14"><path d="M3 7.2 L5.8 10.2 L11.2 3.6" fill="none" stroke="#262626" stroke-width="1.7"/></svg>
<div class="t" style="left:417.40px;top:366.90px;font-size:13px;line-height:13px;font-weight:700;color:#2b2b2b;letter-spacing:-0.502px;">Part Management &amp; Troubleshooting</div>
<div class="a" style="left:356px;top:392px;width:282px;height:41px;background:#fff;border:1px solid #a8a8a8;border-right:none;box-sizing:border-box"></div>
<div class="a" style="left:367px;top:406px;width:14px;height:14px;background:#fff;border:1px solid #5a5a5a;box-sizing:border-box"></div>
<svg class="a" style="left:367px;top:406px" width="14" height="14"><path d="M3 7.2 L5.8 10.2 L11.2 3.6" fill="none" stroke="#262626" stroke-width="1.7"/></svg>
<div class="t" style="left:417.40px;top:406.90px;font-size:13px;line-height:13px;font-weight:700;color:#2b2b2b;letter-spacing:-0.488px;">Angle Resolution</div>
<div class="a" style="left:358px;top:432px;width:280px;height:41px;background:linear-gradient(90deg,#efefef,#e9e9e9 60%,#e2e2e2);border:1px solid #a8a8a8;border-right:none;box-sizing:border-box"></div>
<div class="a" style="left:367px;top:446px;width:14px;height:14px;background:#fff;border:1px solid #5a5a5a;box-sizing:border-box"></div>
<div class="t" style="left:417.40px;top:446.90px;font-size:13px;line-height:13px;font-weight:700;color:#2b2b2b;letter-spacing:-0.494px;">Program Transfer</div>
<div class="a" style="left:358px;top:472px;width:280px;height:41px;background:linear-gradient(90deg,#efefef,#e9e9e9 60%,#e2e2e2);border:1px solid #a8a8a8;border-right:none;box-sizing:border-box"></div>
<div class="t" style="left:417.40px;top:486.90px;font-size:13px;line-height:13px;font-weight:700;color:#2b2b2b;letter-spacing:-0.463px;">Material Setup</div>
<div class="a" style="left:356px;top:957px;width:110px;height:38px;background:linear-gradient(180deg,#f0f0f0,#e5e5e5);border:1px solid #adadad;box-sizing:border-box"></div>
<svg class="a" style="left:372px;top:963px" width="27" height="26"><rect x="1" y="0" width="26" height="26" rx="3" fill="#000"/><rect x="7" y="6" width="2.6" height="14" fill="#fff"/><path d="M20.5 6 V20 L11 13Z" fill="#fff"/></svg>
<div class="t" style="left:404.40px;top:970.20px;font-size:13px;line-height:13px;font-weight:700;color:#2b2b2b;letter-spacing:-0.840px;">Previous</div>
<div class="a" style="left:471px;top:957px;width:90px;height:38px;background:linear-gradient(180deg,#f0f0f0,#e5e5e5);border:1px solid #adadad;box-sizing:border-box"></div>
<svg class="a" style="left:489px;top:963px" width="27" height="26"><rect x="0" y="0" width="26" height="26" rx="3" fill="#000"/><rect x="17.4" y="6" width="2.6" height="14" fill="#fff"/><path d="M6.5 6 V20 L16 13Z" fill="#fff"/></svg>
<div class="t" style="left:519.90px;top:970.20px;font-size:13px;line-height:13px;font-weight:700;color:#2b2b2b;letter-spacing:-0.345px;">Next</div>

<div class="a" style="left:643px;top:62px;width:795px;height:221px;border:1px solid #a8a8a8;border-top:2px solid #a8a8a8;border-right:2px solid #b0b0b0;box-sizing:border-box"></div>
<div class="a" style="left:1436px;top:61px;width:2px;height:938px;background:#b0b0b0"></div>
<div class="a" style="left:644px;top:84px;width:793px;height:1px;background:#a8a8a8"></div>
<div class="t" style="left:655.50px;top:68.64px;font-size:12px;line-height:12px;color:#1e1e1e;letter-spacing:-0.041px;">Machine Angle Correction Center</div>
<div class="a" style="left:648px;top:91px;width:34px;height:28px;background:#fff;border:1px solid #c6c6c6;box-sizing:border-box"></div>
<div class="a" style="left:648px;top:123px;width:34px;height:28px;background:#fff;border:1px solid #c6c6c6;box-sizing:border-box"></div>
<div class="a" style="left:648px;top:155px;width:34px;height:28px;background:#fff;border:1px solid #c6c6c6;box-sizing:border-box"></div>
<div class="a" style="left:648px;top:187px;width:34px;height:28px;background:#fff;border:1px solid #c6c6c6;box-sizing:border-box"></div>
<svg class="a" style="left:648px;top:91px" width="34" height="124" viewBox="648 91 34 124">
<g fill="none" stroke="#111" stroke-width="2">
<path d="M657.8 97 V111.6 H672.6"/>
<path d="M657.8 129.3 V144 H672.6"/>
<path d="M657.8 161.3 V176 H665"/>
<circle cx="668.7" cy="135.4" r="4.8"/>
<circle cx="670.6" cy="175.2" r="3.6"/>
</g>
<path d="M663.5 99 Q670 99 671.8 105.5 L670 105.8 Q668.5 101.5 664.2 101.5Z" fill="#111"/>
<path d="M668 105 L674.5 104.2 L671.2 109.5Z" fill="#111"/>
<path d="M666 134.5 A2.8 2.8 0 0 1 671 134 M671.3 136.3 A2.8 2.8 0 0 1 666.3 136.8" fill="none" stroke="#111" stroke-width="1.4"/>
<path d="M670 132.5 L672.2 134.8 L669.5 135.3Z M667.4 138.3 L665.2 136 L667.9 135.5Z" fill="#111"/>
<path d="M661.7 164.3 H669.5" stroke="#111" stroke-width="2"/>
<path d="M668.5 161 L673.2 164.3 L668.5 167.6Z" fill="#111"/>
<path d="M669.2 173.5 L671.8 175.2 L669.2 176.9Z" fill="#111"/>
<path d="M668.5 190.5 L675.5 197.5 L673 199.5 L670.8 198.8 L667.5 202.2 L667.8 204.5 L666 206 L659.2 199.2 L660.8 197.5 L663 197.8 L666.5 194.3 L666 192.2Z" fill="#111"/>
<path d="M662.5 202.7 L656.3 209.5" stroke="#111" stroke-width="1.8"/>
<path d="M667.2 205.5 L669.5 208.2 L673.8 203" fill="none" stroke="#111" stroke-width="1.5"/>
</svg>
<div class="a" style="left:691px;top:90px;width:1px;height:187px;background:#c8c8c8"></div>
<div class="t" style="left:701.50px;top:93.04px;font-size:12px;line-height:12px;color:#3a3a3a;letter-spacing:-0.093px;">Part Number</div>
<svg class="a" style="left:924px;top:90px" width="50" height="16" viewBox="924 90 50 16">
<rect x="925.5" y="91" width="12.5" height="13.5" rx="1.5" fill="#111"/><rect x="927.8" y="93.5" width="1.8" height="8.5" fill="#fff"/><path d="M936 93.5 V102 L930.5 97.75Z" fill="#fff"/>
<rect x="959" y="91" width="12.5" height="13.5" rx="1.5" fill="#111"/><rect x="967.4" y="93.5" width="1.8" height="8.5" fill="#fff"/><path d="M961 93.5 V102 L966.5 97.75Z" fill="#fff"/>
</svg>
<div class="a" style="left:701px;top:114px;width:280px;height:163px;border:1px solid #c8c8c8;box-sizing:border-box"></div>
<div class="a" style="left:990px;top:90px;width:1px;height:187px;background:#c8c8c8"></div>
<svg class="a" style="left:1000px;top:86px" width="180" height="26" viewBox="1000 86 180 26">
<g fill="none" stroke="#111" stroke-width="1.8">
<path d="M1009 101 A6 6 0 0 1 1020 96.5"/><path d="M1043.5 101 A6 6 0 0 1 1054.5 96.5"/><path d="M1077.7 101 A6 6 0 0 1 1088.7 96.5"/>
</g>
<path d="M1017.5 94.5 L1022.5 94.2 L1021 99Z M1052 94.5 L1057 94.2 L1055.5 99Z M1086.2 94.5 L1091.2 94.2 L1089.7 99Z" fill="#111"/>
<text x="1012" y="105.5" font-size="7.5" font-weight="700" font-family="Liberation Sans" text-anchor="middle" fill="#111">90</text>
<text x="1048.4" y="105.5" font-size="7.5" font-weight="700" font-family="Liberation Sans" text-anchor="middle" fill="#111">180</text>
<text x="1082.4" y="105.5" font-size="7.5" font-weight="700" font-family="Liberation Sans" text-anchor="middle" fill="#111">270</text>
<rect x="1102" y="92" width="1" height="14" fill="#c0c0c0"/>
<path d="M1118 95 Q1122 95 1123.5 99" fill="none" stroke="#111" stroke-width="1.8"/><path d="M1120.5 99 L1126 98 L1124 103Z" fill="#111"/>
<circle cx="1156" cy="99.3" r="6.2" fill="none" stroke="#111" stroke-width="2"/>
<path d="M1152.8 99 A3.3 3.3 0 0 1 1158.8 97.6 M1159.2 99.8 A3.3 3.3 0 0 1 1153.2 101.2" fill="none" stroke="#111" stroke-width="2"/>
<path d="M1157.5 96 L1160.5 96.5 L1159.5 99Z M1154.5 102.5 L1151.5 102 L1152.5 99.5Z" fill="#111"/>
</svg>
<div class="a" style="left:1195px;top:87px;width:100px;height:24px;background:#fff;border:1px solid #adadad;box-sizing:border-box"></div>
<svg class="a" style="left:1200px;top:89px" width="20" height="19" viewBox="1200 89 20 19">
<g transform="translate(1209.8 98.4) rotate(45)" fill="#111">
<rect x="-3.6" y="-7.6" width="7.2" height="2"/><rect x="-2.1" y="-6" width="4.2" height="5.5"/><rect x="-4.3" y="-1" width="8.6" height="2"/>
<rect x="-0.7" y="0.8" width="1.4" height="8"/></g>
<path d="M1209.8 103.8 L1211.8 106 L1215.8 101.4" fill="none" stroke="#111" stroke-width="1.5"/>
</svg>
<div class="t" style="left:1228.30px;top:93.64px;font-size:12px;line-height:12px;color:#222;letter-spacing:-0.058px;">Confirm</div>
<svg class="a" style="left:1408px;top:90px" width="20" height="18" viewBox="0 0 20 18">
<g transform="translate(6 7)" fill="#111"><circle r="4"/><path d="M-1.2-6h2.4v12h-2.4zM-6-1.2h12v2.4h-12z"/><path d="M-1.2-6h2.4v12h-2.4zM-6-1.2h12v2.4h-12z" transform="rotate(45)"/><circle r="1.6" fill="#fff"/></g>
<g transform="translate(14 7)" fill="#111"><circle r="2.6"/><path d="M-0.9-4h1.8v8h-1.8zM-4-0.9h8v1.8h-8z"/><path d="M-0.9-4h1.8v8h-1.8zM-4-0.9h8v1.8h-8z" transform="rotate(45)"/><circle r="1" fill="#fff"/></g>
<g transform="translate(12.5 13.5)" fill="#111"><circle r="2.6"/><path d="M-0.9-4h1.8v8h-1.8zM-4-0.9h8v1.8h-8z"/><path d="M-0.9-4h1.8v8h-1.8zM-4-0.9h8v1.8h-8z" transform="rotate(45)"/><circle r="1" fill="#fff"/></g>
</svg>
<div class="t" style="left:1000.20px;top:121.04px;font-size:12px;line-height:12px;color:#333;letter-spacing:-0.321px;">Reference Feature</div>
<div class="t" style="left:1000.20px;top:149.24px;font-size:12px;line-height:12px;color:#333;letter-spacing:-0.196px;">CAD Angle</div>
<div class="t" style="left:1000.20px;top:177.24px;font-size:12px;line-height:12px;color:#333;letter-spacing:-0.182px;">Machine Angle</div>
<div class="t" style="left:1000.20px;top:205.34px;font-size:12px;line-height:12px;color:#333;letter-spacing:-0.108px;">Features Affected</div>
<div class="t" style="left:1000.20px;top:231.24px;font-size:12px;line-height:12px;color:#333;letter-spacing:-0.180px;">Package Link</div>
<div class="a" style="left:1099px;top:115px;width:301px;height:22px;border:1px solid #acacac;box-sizing:border-box;background:#fff"></div>
<div class="a" style="left:1383px;top:118px;width:15px;height:16px;border:1px solid #c0c0c0;box-sizing:border-box;background:#eaeaea"></div>
<div class="a" style="left:1099px;top:143px;width:282px;height:22px;border:1px solid #c8c8c8;box-sizing:border-box;background:#fff"></div>
<div class="t" style="left:1103.90px;top:149.24px;font-size:12px;line-height:12px;color:#222;">0.0</div>
<div class="t" style="left:1385.50px;top:146.34px;font-size:12px;line-height:12px;color:#444;letter-spacing:-0.496px;">CW</div>
<div class="a" style="left:1099px;top:171px;width:271px;height:22px;border:1px solid #acacac;box-sizing:border-box;background:#fff"></div>
<div class="t" style="left:1103.90px;top:177.24px;font-size:12px;line-height:12px;color:#222;">0.0</div>
<div class="a" style="left:1099px;top:199px;width:305px;height:22px;border:1px solid #acacac;box-sizing:border-box;background:#fff"></div>
<div class="a" style="left:1387px;top:202px;width:15px;height:16px;border:1px solid #c0c0c0;box-sizing:border-box;background:#eaeaea"></div>
<div class="a" style="left:1099px;top:225px;width:305px;height:22px;border:1px solid #c8c8c8;box-sizing:border-box;background:#fff"></div>
<svg class="a" style="left:1380px;top:110px" width="30" height="115" viewBox="1380 110 30 115">
<path d="M1387 124 L1390.5 127.5 L1394 124" fill="none" stroke="#555" stroke-width="1.2"/>
<path d="M1391 208 L1394.5 211.5 L1398 208" fill="none" stroke="#555" stroke-width="1.2"/>
<path d="M1393 180 A5 5 0 1 0 1393 187" fill="none" stroke="#111" stroke-width="2.2"/>
<path d="M1391 177 L1395.5 179.5 L1391.5 182Z" fill="#111"/><circle cx="1388.7" cy="183.5" r="1.5" fill="#111"/>
</svg>
<div class="a" style="left:1000px;top:256px;width:404px;height:1px;background:#c8c8c8"></div>
<div class="a" style="left:1000px;top:264px;width:10px;height:10px;background:#0a7a0a"></div>
<div class="a" style="left:1112px;top:264px;width:10px;height:10px;background:#0000ff"></div>
<div class="a" style="left:1236px;top:264px;width:10px;height:10px;background:#f00000"></div>
<div class="t" style="left:1015.00px;top:263.54px;font-size:12px;line-height:12px;color:#333;letter-spacing:-0.185px;">Confirmed</div>
<div class="t" style="left:1076.00px;top:263.54px;font-size:12px;line-height:12px;color:#333;letter-spacing:-0.400px;">0000</div>
<div class="t" style="left:1127.10px;top:263.54px;font-size:12px;line-height:12px;color:#333;letter-spacing:-0.186px;">Unconfirmed</div>
<div class="t" style="left:1200.80px;top:263.54px;font-size:12px;line-height:12px;color:#333;letter-spacing:-0.400px;">0000</div>
<div class="t" style="left:1251.80px;top:263.54px;font-size:12px;line-height:12px;color:#333;letter-spacing:-0.163px;">Errors</div>
<div class="t" style="left:1287.60px;top:263.54px;font-size:12px;line-height:12px;color:#333;letter-spacing:-0.400px;">0000</div>
<div class="a" style="left:646px;top:312px;width:1px;height:686px;background:#d4d4d4"></div>
<div class="a" style="left:646px;top:312px;width:791px;height:1px;background:#d4d4d4"></div>
<div class="a" style="left:1420px;top:313px;width:16px;height:643px;background:#f0f0f0"></div>
<div class="a" style="left:647px;top:956px;width:789px;height:16px;background:#f0f0f0"></div>
<div class="a" style="left:785px;top:956px;width:496px;height:16px;background:#c2c2c2"></div>
<div class="a" style="left:647px;top:972px;width:789px;height:24px;background:#0070c6"></div>
<div class="a" style="left:647px;top:996px;width:789px;height:2px;background:#f0f0f0"></div>
<svg class="a" style="left:646px;top:312px" width="792" height="686" viewBox="646 312 792 686">
<path d="M1424.5 325 L1428.3 321 L1432 325" fill="none" stroke="#a8a8a8" stroke-width="1.3"/>
<path d="M1424.5 944.5 L1428.3 948.5 L1432 944.5" fill="none" stroke="#c8c8c8" stroke-width="1.3"/>
<path d="M659 960.5 L655 964 L659 967.5" fill="none" stroke="#555" stroke-width="1.5"/>
<path d="M1410 960.5 L1414 964 L1410 967.5" fill="none" stroke="#555" stroke-width="1.5"/>
<rect x="1400.5" y="933.5" width="19" height="19" fill="#efefef" stroke="#aaa"/>
<circle cx="1410" cy="943" r="5" fill="#2a9a3a" stroke="#888" stroke-width="1"/><path d="M1408 941 L1411 941 L1411 944" fill="none" stroke="#fff" stroke-width="1.2"/>
</svg>
<div class="t" style="left:651.00px;top:978.84px;font-size:12px;line-height:12px;color:#fff;letter-spacing:-0.295px;">(2.0429 , 2.8646) Inches</div>
<div class="a" style="left:1329px;top:974px;width:56px;height:21px;background:#fff;border:1px solid #c8c8c8;box-sizing:border-box"></div>
<div class="t" style="left:1333.00px;top:979.34px;font-size:12px;line-height:12px;color:#333;letter-spacing:-0.673px;">214%</div>
<div class="a" style="left:1369px;top:975px;width:15px;height:19px;background:#f4f4f4;border:1px solid #c0c0c0;box-sizing:border-box"></div>
<svg class="a" style="left:1180px;top:972px" width="258" height="24" viewBox="1180 972 258 24">
<path d="M1373.5 981 L1376.5 978 L1379.5 981 M1373.5 987 L1376.5 990 L1379.5 987" fill="none" stroke="#666" stroke-width="1"/>
<g>
<path d="M1198 981 V978 A3 3 0 0 1 1204 978 V981" fill="none" stroke="#d0d0d0" stroke-width="1.8"/>
<rect x="1191.5" y="981" width="10" height="7.5" fill="#3a3a10"/><path d="M1192 986 l2-3 M1195 987 l2.5-4 M1198 987 l2.5-4" stroke="#e8c020" stroke-width="1.2"/>
</g>
<rect x="1213.5" y="976" width="14" height="16" fill="none" stroke="#333" stroke-dasharray="1.5 1.5"/>
<path d="M1215 990.5 L1219 985.5" stroke="#5a4a20" stroke-width="3.4" stroke-linecap="round"/><path d="M1215 990.5 L1219 985.5" stroke="#e0c080" stroke-width="2" stroke-linecap="round"/><circle cx="1221.5" cy="982.5" r="4" fill="#d8ecf8" stroke="#4a5a6a" stroke-width="1.1"/><path d="M1239 990.5 L1243 985.5" stroke="#5a4a20" stroke-width="3.4" stroke-linecap="round"/><path d="M1239 990.5 L1243 985.5" stroke="#e0c080" stroke-width="2" stroke-linecap="round"/><circle cx="1245.5" cy="982.5" r="4" fill="#d8ecf8" stroke="#4a5a6a" stroke-width="1.1"/><path d="M1263 990.5 L1267 985.5" stroke="#5a4a20" stroke-width="3.4" stroke-linecap="round"/><path d="M1263 990.5 L1267 985.5" stroke="#e0c080" stroke-width="2" stroke-linecap="round"/><circle cx="1269.5" cy="982.5" r="4" fill="#d8ecf8" stroke="#4a5a6a" stroke-width="1.1"/><path d="M1284 990.5 L1288 985.5" stroke="#5a4a20" stroke-width="3.4" stroke-linecap="round"/><path d="M1284 990.5 L1288 985.5" stroke="#e0c080" stroke-width="2" stroke-linecap="round"/><circle cx="1290.5" cy="982.5" r="4" fill="#d8ecf8" stroke="#4a5a6a" stroke-width="1.1"/><path d="M1308 990.5 L1312 985.5" stroke="#5a4a20" stroke-width="3.4" stroke-linecap="round"/><path d="M1308 990.5 L1312 985.5" stroke="#e0c080" stroke-width="2" stroke-linecap="round"/><circle cx="1314.5" cy="982.5" r="4" fill="#d8ecf8" stroke="#4a5a6a" stroke-width="1.1"/><path d="M1394 990.5 L1398 985.5" stroke="#5a4a20" stroke-width="3.4" stroke-linecap="round"/><path d="M1394 990.5 L1398 985.5" stroke="#e0c080" stroke-width="2" stroke-linecap="round"/><circle cx="1400.5" cy="982.5" r="4" fill="#d8ecf8" stroke="#4a5a6a" stroke-width="1.1"/><path d="M1417 990.5 L1421 985.5" stroke="#5a4a20" stroke-width="3.4" stroke-linecap="round"/><path d="M1417 990.5 L1421 985.5" stroke="#e0c080" stroke-width="2" stroke-linecap="round"/><circle cx="1423.5" cy="982.5" r="4" fill="#d8ecf8" stroke="#4a5a6a" stroke-width="1.1"/>
<text x="1244" y="979.5" font-size="8.5" font-weight="700" font-family="Liberation Sans" text-anchor="middle" fill="#3a3a3a">100</text>
<text x="1266" y="979.5" font-size="8.5" font-weight="700" font-family="Liberation Sans" text-anchor="middle" fill="#3a3a3a">ALL</text>
<path d="M1285 978.5h4.5M1291 978.5h4.5M1314 978.5h5.5M1404 977h6M1407 974v6" stroke="#222" stroke-width="2"/>
<path d="M1420 977h5M1422.5 974.5v5M1426 977h5M1428.5 974.5v5" stroke="#111" stroke-width="1.8"/>
</svg>

<svg class="a" style="left:647px;top:313px;overflow:hidden" width="773" height="643" viewBox="647 313 773 643">
<g font-family="Liberation Sans" fill="#111">
<text x="670" y="401" font-size="13" text-anchor="middle">Q1</text>
<text x="652" y="449" font-size="13" text-anchor="middle">6</text>
<text x="798.6" y="396" font-size="13" text-anchor="middle">J9</text>
<text x="950.3" y="387.7" font-size="13" text-anchor="middle">C56</text>
<text x="950.3" y="465.5" font-size="14" text-anchor="middle">U23</text>
<text x="1037.2" y="380" font-size="13" text-anchor="middle">J8</text>
<text x="1264.9" y="389" font-size="13" text-anchor="middle">TP30</text>
<text x="996.5" y="466.8" font-size="8" text-anchor="middle">R30</text>
<text x="1018.0" y="466.8" font-size="8" text-anchor="middle">R19</text>
<text x="1033.35" y="466.8" font-size="8" text-anchor="middle">R18</text>
<text x="1048.7" y="466.8" font-size="8" text-anchor="middle">R17</text>
<text x="1064.05" y="466.8" font-size="8" text-anchor="middle">R16</text>
<text x="1018.0" y="527.3" font-size="7" text-anchor="middle">C23</text>
<text x="1033.35" y="527.3" font-size="7" text-anchor="middle">C22</text>
<text x="1048.7" y="527.3" font-size="7" text-anchor="middle">C21</text>
<text x="1084" y="507" font-size="12" text-anchor="middle" transform="rotate(-90 1084 507)">C20</text>
<text x="1139.3" y="487.7" font-size="13" text-anchor="middle">R33</text>
<text x="1107.3" y="526.2" font-size="13" text-anchor="middle">R32</text>
<text x="1208.4" y="526.2" font-size="13" text-anchor="middle">C1</text>
<text x="1259.6" y="511.3" font-size="9" text-anchor="middle">C25</text>
<text x="1287.7" y="507" font-size="14" text-anchor="middle">U10</text>
<text x="1315.6" y="516.1" font-size="9" text-anchor="middle">C24</text>
<text x="1348.1" y="510" font-size="14" text-anchor="middle">L1</text>
<text x="1418" y="515" font-size="13" text-anchor="start">R</text>
<text x="1411" y="547.8" font-size="13" text-anchor="end">R6</text>
<text x="1411" y="563" font-size="13" text-anchor="end">R7</text>
<text x="1418" y="582" font-size="13" text-anchor="start">C</text>
<text x="1410" y="613.6" font-size="13" text-anchor="start">R</text>
<text x="658.05" y="543" font-size="9" text-anchor="middle">C16</text>
<text x="745.2" y="542.5" font-size="9" text-anchor="middle">C17</text>
<text x="832.8" y="543.7" font-size="9" text-anchor="middle">C18</text>
<text x="920.1500000000001" y="543" font-size="9" text-anchor="middle">C19</text>
<text x="658.05" y="583.9" font-size="9" text-anchor="middle">C30</text>
<text x="745.2" y="585" font-size="9" text-anchor="middle">C31</text>
<text x="832.8" y="585" font-size="9" text-anchor="middle">C32</text>
<text x="920.1500000000001" y="584" font-size="9" text-anchor="middle">C33</text>
<text x="701.8499999999999" y="543.6" font-size="13" text-anchor="middle">U8</text>
<text x="788.95" y="543.6" font-size="13" text-anchor="middle">U9</text>
<text x="876.4" y="543.6" font-size="13" text-anchor="middle">U11</text>
<text x="734.6" y="636.3" font-size="9" text-anchor="middle">R28</text>
<text x="723" y="697.3" font-size="14" text-anchor="end">J10</text>
<text x="650" y="662" font-size="9" text-anchor="middle">26</text>
<text x="837.9" y="652.9" font-size="9" text-anchor="middle">TP27</text>
<text x="889.4" y="658.3" font-size="9" text-anchor="middle">TP23</text>
<text x="842" y="722.1" font-size="15" text-anchor="end">TP25</text>
<text x="884.7" y="718" font-size="9" text-anchor="middle">R34</text>
<text x="904.8" y="717" font-size="9" text-anchor="middle">U24</text>
<text x="997.9" y="516.6" font-size="14" text-anchor="middle">C53</text>
<text x="978" y="558" font-size="15" text-anchor="end">U22</text>
<text x="1037" y="580.5" font-size="14" text-anchor="middle">U7</text>
<text x="1075" y="539" font-size="14" text-anchor="middle" transform="rotate(-90 1075 539)">TP1</text>
<text x="985" y="604.1" font-size="15" text-anchor="end">J14</text>
<text x="1040.5" y="623" font-size="14" text-anchor="end">C35</text>
<text x="1104.8" y="569.4" font-size="14" text-anchor="middle">R3</text>
<text x="1190" y="572.2" font-size="15" text-anchor="middle">R1</text>
<text x="1216.6" y="598.2" font-size="15" text-anchor="start">R2</text>
<text x="1194" y="597" font-size="14" text-anchor="middle" transform="rotate(-90 1194 597)">TP32</text>
<text x="1237.8" y="629.9" font-size="14" text-anchor="start">C37</text>
<text x="1262.7" y="567.9" font-size="13" text-anchor="end">R22</text>
<text x="1301.7" y="584.5" font-size="13" text-anchor="middle">R23</text>
<text x="1156.3" y="630.6" font-size="8" text-anchor="middle">R27</text>
<text x="1182" y="661" font-size="14" text-anchor="middle">J?</text>
<text x="1229.6" y="649.5" font-size="14" text-anchor="middle">C42</text>
<text x="1270.2" y="649.5" font-size="14" text-anchor="middle">C48</text>
<text x="1299.3" y="639.3" font-size="14" text-anchor="middle">C41</text>
<text x="1328" y="643.5" font-size="14" text-anchor="middle" transform="rotate(-90 1328 643.5)">U18</text>
<text x="1152" y="676.7" font-size="14" text-anchor="middle">TP28</text>
<text x="1220" y="694" font-size="14" text-anchor="end">U19</text>
<text x="1257" y="690" font-size="14" text-anchor="middle" transform="rotate(-90 1257 690)">U20</text>
<text x="1214.5" y="722" font-size="14" text-anchor="end">C45</text>
<text x="1270.2" y="738.6" font-size="14" text-anchor="middle">C49</text>
<text x="1357.2" y="692" font-size="8" text-anchor="middle">C46</text>
<text x="1292" y="741" font-size="8" text-anchor="middle" transform="rotate(-90 1292 741)">C43</text>
<text x="1350" y="742" font-size="14" text-anchor="start">C47</text>
<text x="1308" y="757" font-size="14" text-anchor="end">C44</text>
<text x="1407.6" y="660.6" font-size="14" text-anchor="end">TP9</text>
<text x="1418" y="691.3" font-size="14" text-anchor="end">TP13</text>
<text x="1418" y="716.9" font-size="14" text-anchor="end">TP12</text>
<text x="1150.6" y="727.9" font-size="15" text-anchor="end">U25</text>
<text x="1177.2" y="711.7" font-size="8" text-anchor="middle">R35</text>
<text x="1105.7" y="762.6" font-size="13" text-anchor="middle">D2</text>
<text x="1131.5" y="768" font-size="14" text-anchor="middle">C36</text>
<text x="1040" y="786" font-size="15" text-anchor="middle">D1</text>
<text x="1114.8" y="811.3" font-size="15" text-anchor="end">U14</text>
<text x="1162.5" y="825.4" font-size="15" text-anchor="middle">R21</text>
<text x="1118" y="840.6" font-size="15" text-anchor="end">R14</text>
<text x="1142" y="856.8" font-size="8" text-anchor="middle">R15</text>
<text x="1094.7" y="853.6" font-size="9" text-anchor="middle">TP22</text>
<text x="1115.3" y="861.2" font-size="8" text-anchor="middle">R31</text>
<text x="1363" y="835.4" font-size="14" text-anchor="middle">LS1</text>
<text x="919.8" y="854" font-size="9" text-anchor="middle">TP21</text>
<text x="961" y="854" font-size="9" text-anchor="middle">TP43</text>
<text x="987.2" y="852.7" font-size="12" text-anchor="middle">TP3</text>
<path d="M647 376.5 H1420 M647 903 H1420" stroke="#3a3a3a" stroke-width="1.6"/>
<path d="M648 405.5 V437" stroke="#1a1a1a" stroke-width="1.2"/>
<rect x="656.5" y="405.5" width="28.50" height="31.80" fill="none" stroke="#1a1a1a" stroke-width="1.2"/>
<rect x="666.8" y="408" width="8.00" height="11.00" fill="#000"/>
<rect x="659" y="425" width="8.00" height="9.00" fill="#ff0000"/>
<rect x="674" y="425" width="8.00" height="9.00" fill="#000"/>
<rect x="655.7" y="437.3" width="25.00" height="15.20" fill="none" stroke="#1a1a1a" stroke-width="1.2"/>
<rect x="659" y="440" width="7.50" height="9.00" fill="#ff0000"/>
<rect x="670" y="440" width="8.00" height="9.00" fill="#000"/>
<rect x="689.5" y="400.4" width="217.50" height="36.00" fill="none" stroke="#1a1a1a" stroke-width="1.2"/>
<rect x="708.0808" y="400.7" width="2.47" height="7.30" fill="#ff0000"/>
<rect x="711.7108" y="400.7" width="2.47" height="7.30" fill="#000"/>
<rect x="715.3408" y="400.7" width="2.47" height="7.30" fill="#000"/>
<rect x="718.9707999999999" y="400.7" width="2.47" height="7.30" fill="#000"/>
<rect x="722.6007999999999" y="400.7" width="2.47" height="7.30" fill="#000"/>
<rect x="726.2307999999999" y="400.7" width="2.47" height="7.30" fill="#000"/>
<rect x="729.8607999999999" y="400.7" width="2.47" height="7.30" fill="#000"/>
<rect x="733.4907999999999" y="400.7" width="2.47" height="7.30" fill="#000"/>
<rect x="737.1207999999999" y="400.7" width="2.47" height="7.30" fill="#000"/>
<rect x="740.7507999999999" y="400.7" width="2.47" height="7.30" fill="#000"/>
<rect x="744.3807999999999" y="400.7" width="2.47" height="7.30" fill="#000"/>
<rect x="748.0107999999999" y="400.7" width="2.47" height="7.30" fill="#000"/>
<rect x="751.6407999999999" y="400.7" width="2.47" height="7.30" fill="#000"/>
<rect x="755.2708" y="400.7" width="2.47" height="7.30" fill="#000"/>
<rect x="758.9008" y="400.7" width="2.47" height="7.30" fill="#000"/>
<rect x="762.5308" y="400.7" width="2.47" height="7.30" fill="#000"/>
<rect x="766.1608" y="400.7" width="2.47" height="7.30" fill="#000"/>
<rect x="769.7908" y="400.7" width="2.47" height="7.30" fill="#000"/>
<rect x="773.4208" y="400.7" width="2.47" height="7.30" fill="#000"/>
<rect x="777.0508" y="400.7" width="2.47" height="7.30" fill="#000"/>
<rect x="780.6808" y="400.7" width="2.47" height="7.30" fill="#000"/>
<rect x="784.3108" y="400.7" width="2.47" height="7.30" fill="#000"/>
<rect x="787.9408" y="400.7" width="2.47" height="7.30" fill="#000"/>
<rect x="791.5708" y="400.7" width="2.47" height="7.30" fill="#000"/>
<rect x="795.2008" y="400.7" width="2.47" height="7.30" fill="#000"/>
<rect x="798.8308" y="400.7" width="2.47" height="7.30" fill="#000"/>
<rect x="802.4608" y="400.7" width="2.47" height="7.30" fill="#000"/>
<rect x="806.0908" y="400.7" width="2.47" height="7.30" fill="#000"/>
<rect x="809.7207999999999" y="400.7" width="2.47" height="7.30" fill="#000"/>
<rect x="813.3507999999999" y="400.7" width="2.47" height="7.30" fill="#000"/>
<rect x="816.9807999999999" y="400.7" width="2.47" height="7.30" fill="#000"/>
<rect x="820.6107999999999" y="400.7" width="2.47" height="7.30" fill="#000"/>
<rect x="824.2407999999999" y="400.7" width="2.47" height="7.30" fill="#000"/>
<rect x="827.8707999999999" y="400.7" width="2.47" height="7.30" fill="#000"/>
<rect x="831.5007999999999" y="400.7" width="2.47" height="7.30" fill="#000"/>
<rect x="835.1307999999999" y="400.7" width="2.47" height="7.30" fill="#000"/>
<rect x="838.7608" y="400.7" width="2.47" height="7.30" fill="#000"/>
<rect x="842.3907999999999" y="400.7" width="2.47" height="7.30" fill="#000"/>
<rect x="846.0208" y="400.7" width="2.47" height="7.30" fill="#000"/>
<rect x="849.6507999999999" y="400.7" width="2.47" height="7.30" fill="#000"/>
<rect x="853.2808" y="400.7" width="2.47" height="7.30" fill="#000"/>
<rect x="856.9107999999999" y="400.7" width="2.47" height="7.30" fill="#000"/>
<rect x="860.5408" y="400.7" width="2.47" height="7.30" fill="#000"/>
<rect x="864.1708" y="400.7" width="2.47" height="7.30" fill="#000"/>
<rect x="867.8008" y="400.7" width="2.47" height="7.30" fill="#000"/>
<rect x="871.4308" y="400.7" width="2.47" height="7.30" fill="#000"/>
<rect x="875.0608" y="400.7" width="2.47" height="7.30" fill="#000"/>
<rect x="878.6908" y="400.7" width="2.47" height="7.30" fill="#000"/>
<rect x="882.3208" y="400.7" width="2.47" height="7.30" fill="#000"/>
<rect x="885.9508" y="400.7" width="2.47" height="7.30" fill="#000"/>
<rect x="690" y="422.7" width="13.00" height="12.30" fill="#000"/>
<rect x="894.4" y="422.7" width="11.60" height="12.30" fill="#000"/>
<circle cx="900.4" cy="448.2" r="12.4" fill="#000"/>
<rect x="937.5" y="391.8" width="25.40" height="14.50" fill="none" stroke="#1a1a1a" stroke-width="1.2"/>
<rect x="941.0" y="395.3" width="7.70" height="7.50" fill="#000"/>
<rect x="951.7" y="395.3" width="7.70" height="7.50" fill="#ff0000"/>
<rect x="918.3" y="409.1" width="66.00" height="43.10" fill="none" stroke="#1a1a1a" stroke-width="1.2"/>
<rect x="919.5" y="411.9" width="23.00" height="6.00" rx="3.00" fill="#000"/>
<rect x="919.5" y="422.2" width="23.00" height="6.00" rx="3.00" fill="#000"/>
<rect x="919.5" y="432.5" width="23.00" height="6.00" rx="3.00" fill="#000"/>
<rect x="919.5" y="442.9" width="23.00" height="6.00" rx="3.00" fill="#000"/>
<rect x="959.7" y="411.9" width="23.10" height="6.00" rx="3.00" fill="#000"/>
<rect x="959.7" y="422.2" width="23.10" height="6.00" rx="3.00" fill="#000"/>
<rect x="959.7" y="432.5" width="23.10" height="6.00" rx="3.00" fill="#000"/>
<rect x="961" y="442.8" width="20.50" height="6.20" fill="#ff0000"/>
<circle cx="1006.7" cy="448.2" r="12.2" fill="#000"/>
<rect x="1011.2" y="384.4" width="51.80" height="29.30" fill="none" stroke="#1a1a1a" stroke-width="1.2"/>
<rect x="1021.9795555555555" y="385.5" width="2.46" height="7.00" fill="#ff0000"/>
<rect x="1025.6017777777777" y="385.5" width="2.46" height="7.00" fill="#000"/>
<rect x="1029.224" y="385.5" width="2.46" height="7.00" fill="#000"/>
<rect x="1032.8462222222222" y="385.5" width="2.46" height="7.00" fill="#000"/>
<rect x="1036.4684444444445" y="385.5" width="2.46" height="7.00" fill="#000"/>
<rect x="1040.0906666666667" y="385.5" width="2.46" height="7.00" fill="#000"/>
<rect x="1043.7128888888888" y="385.5" width="2.46" height="7.00" fill="#000"/>
<rect x="1047.335111111111" y="385.5" width="2.46" height="7.00" fill="#000"/>
<rect x="1050.9573333333333" y="385.5" width="2.46" height="7.00" fill="#000"/>
<rect x="1012" y="405.8" width="5.00" height="7.20" fill="#000"/>
<rect x="1057" y="405.8" width="5.00" height="7.20" fill="#000"/>
<circle cx="1076" cy="408.4" r="9" fill="#000"/>
<circle cx="1089.4" cy="434.2" r="12.4" fill="#000"/>
<circle cx="1206.7" cy="408.3" r="8.8" fill="#000"/>
<circle cx="1192.2" cy="434.3" r="12.4" fill="#000"/>
<circle cx="1412" cy="390" r="8.5" fill="#000"/>
<circle cx="1412" cy="434.7" r="8.5" fill="#000"/>
<rect x="1244" y="393.9" width="41.60" height="20.90" fill="none" stroke="#1a1a1a" stroke-width="1.2"/>
<rect x="1248.8" y="395" width="32.40" height="18.80" fill="#ff0000"/>
<circle cx="1254.3" cy="445.1" r="9" fill="#ff0000"/>
<circle cx="1292.8" cy="445.1" r="9" fill="#000"/>
<circle cx="1331.3" cy="445.1" r="9" fill="#000"/>
<rect x="1244" y="462.4" width="34.40" height="16.90" fill="none" stroke="#1a1a1a" stroke-width="1.2"/>
<rect x="1247" y="465.4" width="12.70" height="10.90" fill="#000"/>
<rect x="1262.7" y="465.4" width="12.70" height="10.90" fill="#ff0000"/>
<rect x="989.9" y="469.3" width="14.80" height="25.00" fill="none" stroke="#1a1a1a" stroke-width="1.2"/>
<rect x="992.9" y="472.3" width="8.80" height="8.00" fill="#000"/>
<rect x="992.9" y="483.3" width="8.80" height="8.00" fill="#ff0000"/>
<rect x="1010.3" y="469.3" width="15.35" height="25.20" fill="none" stroke="#1a1a1a" stroke-width="1.2"/>
<rect x="1013.3" y="472.3" width="9.35" height="8.10" fill="#ff0000"/>
<rect x="1013.3" y="483.4" width="9.35" height="8.10" fill="#000"/>
<rect x="1010.3" y="494.5" width="15.35" height="24.50" fill="none" stroke="#1a1a1a" stroke-width="1.2"/>
<rect x="1013.3" y="497.5" width="9.35" height="7.75" fill="#000"/>
<rect x="1013.3" y="508.25" width="9.35" height="7.75" fill="#ff0000"/>
<rect x="1025.6499999999999" y="469.3" width="15.35" height="25.20" fill="none" stroke="#1a1a1a" stroke-width="1.2"/>
<rect x="1028.6499999999999" y="472.3" width="9.35" height="8.10" fill="#ff0000"/>
<rect x="1028.6499999999999" y="483.4" width="9.35" height="8.10" fill="#000"/>
<rect x="1025.6499999999999" y="494.5" width="15.35" height="24.50" fill="none" stroke="#1a1a1a" stroke-width="1.2"/>
<rect x="1028.6499999999999" y="497.5" width="9.35" height="7.75" fill="#000"/>
<rect x="1028.6499999999999" y="508.25" width="9.35" height="7.75" fill="#ff0000"/>
<rect x="1041.0" y="469.3" width="15.35" height="25.20" fill="none" stroke="#1a1a1a" stroke-width="1.2"/>
<rect x="1044.0" y="472.3" width="9.35" height="8.10" fill="#ff0000"/>
<rect x="1044.0" y="483.4" width="9.35" height="8.10" fill="#000"/>
<rect x="1041.0" y="494.5" width="15.35" height="24.50" fill="none" stroke="#1a1a1a" stroke-width="1.2"/>
<rect x="1044.0" y="497.5" width="9.35" height="7.75" fill="#000"/>
<rect x="1044.0" y="508.25" width="9.35" height="7.75" fill="#ff0000"/>
<rect x="1056.35" y="469.3" width="15.35" height="25.20" fill="none" stroke="#1a1a1a" stroke-width="1.2"/>
<rect x="1059.35" y="472.3" width="9.35" height="8.10" fill="#ff0000"/>
<rect x="1059.35" y="483.4" width="9.35" height="8.10" fill="#000"/>
<rect x="1056.35" y="494.5" width="15.35" height="24.50" fill="none" stroke="#1a1a1a" stroke-width="1.2"/>
<rect x="1059.35" y="497.5" width="9.35" height="7.75" fill="#000"/>
<rect x="1059.35" y="508.25" width="9.35" height="7.75" fill="#ff0000"/>
<rect x="1126.6" y="492" width="25.20" height="14.40" fill="none" stroke="#1a1a1a" stroke-width="1.2"/>
<rect x="1129.6" y="495" width="8.10" height="8.40" fill="#000"/>
<rect x="1140.6999999999998" y="495" width="8.10" height="8.40" fill="#ff0000"/>
<circle cx="1096" cy="500.2" r="6.2" fill="#000"/>
<circle cx="1186.2" cy="500.2" r="6.2" fill="#000"/>
<rect x="1094.3" y="530.5" width="25.30" height="14.90" fill="none" stroke="#1a1a1a" stroke-width="1.2"/>
<rect x="1097.3" y="533.5" width="8.15" height="8.90" fill="#000"/>
<rect x="1108.4499999999998" y="533.5" width="8.15" height="8.90" fill="#ff0000"/>
<rect x="1200.8" y="530.4" width="14.60" height="24.80" fill="none" stroke="#1a1a1a" stroke-width="1.2"/>
<rect x="1203.8" y="533.4" width="8.60" height="7.90" fill="#000"/>
<rect x="1203.8" y="544.3" width="8.60" height="7.90" fill="#ff0000"/>
<rect x="1200.8" y="555.2" width="14.60" height="25.30" fill="none" stroke="#1a1a1a" stroke-width="1.2"/>
<rect x="1203.8" y="558.2" width="8.60" height="8.15" fill="#000"/>
<rect x="1203.8" y="569.35" width="8.60" height="8.15" fill="#ff0000"/>
<rect x="1200.8" y="580.5" width="14.60" height="26.00" fill="none" stroke="#1a1a1a" stroke-width="1.2"/>
<rect x="1203.8" y="583.5" width="8.60" height="8.50" fill="#000"/>
<rect x="1203.8" y="595.0" width="8.60" height="8.50" fill="#ff0000"/>
<rect x="1251.2" y="514.1" width="16.80" height="34.40" fill="none" stroke="#1a1a1a" stroke-width="1.2"/>
<rect x="1254.2" y="517.1" width="10.80" height="12.70" fill="#ff0000"/>
<rect x="1254.2" y="532.8" width="10.80" height="12.70" fill="#000"/>
<rect x="1272.3" y="511.3" width="30.60" height="43.30" fill="none" stroke="#1a1a1a" stroke-width="1.2"/>
<rect x="1277" y="517" width="6.00" height="10.00" fill="#000"/>
<rect x="1277" y="539" width="6.00" height="10.00" fill="#000"/>
<rect x="1285" y="517" width="6.00" height="10.00" fill="#000"/>
<rect x="1285" y="539" width="6.00" height="10.00" fill="#000"/>
<rect x="1293" y="517" width="6.00" height="10.00" fill="#ff0000"/>
<rect x="1293" y="539" width="6.00" height="10.00" fill="#000"/>
<rect x="1307.7" y="519.7" width="16.80" height="33.70" fill="none" stroke="#1a1a1a" stroke-width="1.2"/>
<rect x="1310.7" y="522.7" width="10.80" height="12.35" fill="#ff0000"/>
<rect x="1310.7" y="538.05" width="10.80" height="12.35" fill="#000"/>
<rect x="1328.2" y="514.1" width="41.30" height="42.60" fill="none" stroke="#1a1a1a" stroke-width="1.2"/>
<rect x="1341" y="519" width="13.00" height="7.00" fill="#000"/>
<rect x="1341" y="544" width="13.00" height="7.00" fill="#ff0000"/>
<rect x="1412.4" y="520.4" width="9.60" height="14.60" fill="none" stroke="#1a1a1a" stroke-width="1.2"/>
<rect x="1415" y="523" width="7.00" height="9.00" fill="#000"/>
<rect x="1412.4" y="535" width="9.60" height="15.00" fill="none" stroke="#1a1a1a" stroke-width="1.2"/>
<rect x="1415" y="538" width="7.00" height="9.00" fill="#ff0000"/>
<rect x="1412.4" y="550" width="9.60" height="15.00" fill="none" stroke="#1a1a1a" stroke-width="1.2"/>
<rect x="1415" y="553" width="7.00" height="9.00" fill="#000"/>
<rect x="1407" y="619" width="15.00" height="14.00" fill="none" stroke="#1a1a1a" stroke-width="1.2"/>
<rect x="1410" y="622" width="12.00" height="8.00" fill="#ff0000"/>
<rect x="650.6" y="546" width="14.90" height="24.40" fill="none" stroke="#1a1a1a" stroke-width="1.2"/>
<rect x="653.6" y="549" width="8.90" height="7.70" fill="#000"/>
<rect x="653.6" y="559.7" width="8.90" height="7.70" fill="#ff0000"/>
<rect x="737.6" y="545.5" width="15.20" height="24.90" fill="none" stroke="#1a1a1a" stroke-width="1.2"/>
<rect x="740.6" y="548.5" width="9.20" height="7.95" fill="#000"/>
<rect x="740.6" y="559.45" width="9.20" height="7.95" fill="#ff0000"/>
<rect x="825.1" y="546.7" width="15.40" height="24.80" fill="none" stroke="#1a1a1a" stroke-width="1.2"/>
<rect x="828.1" y="549.7" width="9.40" height="7.90" fill="#000"/>
<rect x="828.1" y="560.6" width="9.40" height="7.90" fill="#ff0000"/>
<rect x="912.6" y="546" width="15.10" height="24.40" fill="none" stroke="#1a1a1a" stroke-width="1.2"/>
<rect x="915.6" y="549" width="9.10" height="7.70" fill="#000"/>
<rect x="915.6" y="559.7" width="9.10" height="7.70" fill="#ff0000"/>
<rect x="650.6" y="586.9" width="14.90" height="24.80" fill="none" stroke="#1a1a1a" stroke-width="1.2"/>
<rect x="653.6" y="589.9" width="8.90" height="7.90" fill="#ff0000"/>
<rect x="653.6" y="600.8" width="8.90" height="7.90" fill="#000"/>
<rect x="737.6" y="588" width="15.20" height="25.00" fill="none" stroke="#1a1a1a" stroke-width="1.2"/>
<rect x="740.6" y="591" width="9.20" height="8.00" fill="#ff0000"/>
<rect x="740.6" y="602.0" width="9.20" height="8.00" fill="#000"/>
<rect x="825.1" y="588" width="15.40" height="25.00" fill="none" stroke="#1a1a1a" stroke-width="1.2"/>
<rect x="828.1" y="591" width="9.40" height="8.00" fill="#ff0000"/>
<rect x="828.1" y="602.0" width="9.40" height="8.00" fill="#000"/>
<rect x="912.6" y="587" width="15.10" height="25.00" fill="none" stroke="#1a1a1a" stroke-width="1.2"/>
<rect x="915.6" y="590" width="9.10" height="8.00" fill="#ff0000"/>
<rect x="915.6" y="601.0" width="9.10" height="8.00" fill="#000"/>
<path d="M647.5 548 V611" stroke="#1a1a1a" stroke-width="1.2"/>
<rect x="668.4" y="548.4" width="66.90" height="61.90" fill="none" stroke="#1a1a1a" stroke-width="1.2"/>
<rect x="671.8306666666666" y="551.1" width="3.53" height="14.80" fill="#000"/>
<rect x="677.0223333333332" y="551.1" width="3.53" height="14.80" fill="#000"/>
<rect x="682.2139999999999" y="551.1" width="3.53" height="14.80" fill="#000"/>
<rect x="687.4056666666667" y="551.1" width="3.53" height="14.80" fill="#000"/>
<rect x="692.5973333333333" y="551.1" width="3.53" height="14.80" fill="#000"/>
<rect x="697.7889999999999" y="551.1" width="3.53" height="14.80" fill="#000"/>
<rect x="702.9806666666666" y="551.1" width="3.53" height="14.80" fill="#000"/>
<rect x="708.1723333333333" y="551.1" width="3.53" height="14.80" fill="#000"/>
<rect x="713.3639999999999" y="551.1" width="3.53" height="14.80" fill="#000"/>
<rect x="718.5556666666665" y="551.1" width="3.53" height="14.80" fill="#000"/>
<rect x="723.7473333333332" y="551.1" width="3.53" height="14.80" fill="#000"/>
<rect x="728.939" y="551.1" width="3.53" height="14.80" fill="#ff0000"/>
<rect x="671.8306666666666" y="593.1" width="3.53" height="15.30" fill="#000"/>
<rect x="677.0223333333332" y="593.1" width="3.53" height="15.30" fill="#000"/>
<rect x="682.2139999999999" y="593.1" width="3.53" height="15.30" fill="#000"/>
<rect x="687.4056666666667" y="593.1" width="3.53" height="15.30" fill="#000"/>
<rect x="692.5973333333333" y="593.1" width="3.53" height="15.30" fill="#000"/>
<rect x="697.7889999999999" y="593.1" width="3.53" height="15.30" fill="#000"/>
<rect x="702.9806666666666" y="593.1" width="3.53" height="15.30" fill="#000"/>
<rect x="708.1723333333333" y="593.1" width="3.53" height="15.30" fill="#000"/>
<rect x="713.3639999999999" y="593.1" width="3.53" height="15.30" fill="#000"/>
<rect x="718.5556666666665" y="593.1" width="3.53" height="15.30" fill="#000"/>
<rect x="723.7473333333332" y="593.1" width="3.53" height="15.30" fill="#000"/>
<rect x="728.939" y="593.1" width="3.53" height="15.30" fill="#000"/>
<rect x="755.4" y="548.4" width="67.10" height="61.90" fill="none" stroke="#1a1a1a" stroke-width="1.2"/>
<rect x="758.8333333333334" y="551.1" width="3.54" height="14.80" fill="#000"/>
<rect x="764.0416666666667" y="551.1" width="3.54" height="14.80" fill="#000"/>
<rect x="769.25" y="551.1" width="3.54" height="14.80" fill="#000"/>
<rect x="774.4583333333334" y="551.1" width="3.54" height="14.80" fill="#000"/>
<rect x="779.6666666666667" y="551.1" width="3.54" height="14.80" fill="#000"/>
<rect x="784.875" y="551.1" width="3.54" height="14.80" fill="#000"/>
<rect x="790.0833333333334" y="551.1" width="3.54" height="14.80" fill="#000"/>
<rect x="795.2916666666667" y="551.1" width="3.54" height="14.80" fill="#000"/>
<rect x="800.5" y="551.1" width="3.54" height="14.80" fill="#000"/>
<rect x="805.7083333333334" y="551.1" width="3.54" height="14.80" fill="#000"/>
<rect x="810.9166666666667" y="551.1" width="3.54" height="14.80" fill="#000"/>
<rect x="816.125" y="551.1" width="3.54" height="14.80" fill="#ff0000"/>
<rect x="758.8333333333334" y="593.1" width="3.54" height="15.30" fill="#000"/>
<rect x="764.0416666666667" y="593.1" width="3.54" height="15.30" fill="#000"/>
<rect x="769.25" y="593.1" width="3.54" height="15.30" fill="#000"/>
<rect x="774.4583333333334" y="593.1" width="3.54" height="15.30" fill="#000"/>
<rect x="779.6666666666667" y="593.1" width="3.54" height="15.30" fill="#000"/>
<rect x="784.875" y="593.1" width="3.54" height="15.30" fill="#000"/>
<rect x="790.0833333333334" y="593.1" width="3.54" height="15.30" fill="#000"/>
<rect x="795.2916666666667" y="593.1" width="3.54" height="15.30" fill="#000"/>
<rect x="800.5" y="593.1" width="3.54" height="15.30" fill="#000"/>
<rect x="805.7083333333334" y="593.1" width="3.54" height="15.30" fill="#000"/>
<rect x="810.9166666666667" y="593.1" width="3.54" height="15.30" fill="#000"/>
<rect x="816.125" y="593.1" width="3.54" height="15.30" fill="#000"/>
<rect x="842.8" y="548.4" width="67.20" height="61.90" fill="none" stroke="#1a1a1a" stroke-width="1.2"/>
<rect x="846.2346666666666" y="551.1" width="3.55" height="14.80" fill="#000"/>
<rect x="851.4513333333333" y="551.1" width="3.55" height="14.80" fill="#000"/>
<rect x="856.6679999999999" y="551.1" width="3.55" height="14.80" fill="#000"/>
<rect x="861.8846666666666" y="551.1" width="3.55" height="14.80" fill="#000"/>
<rect x="867.1013333333333" y="551.1" width="3.55" height="14.80" fill="#000"/>
<rect x="872.318" y="551.1" width="3.55" height="14.80" fill="#000"/>
<rect x="877.5346666666667" y="551.1" width="3.55" height="14.80" fill="#000"/>
<rect x="882.7513333333333" y="551.1" width="3.55" height="14.80" fill="#000"/>
<rect x="887.968" y="551.1" width="3.55" height="14.80" fill="#000"/>
<rect x="893.1846666666667" y="551.1" width="3.55" height="14.80" fill="#000"/>
<rect x="898.4013333333332" y="551.1" width="3.55" height="14.80" fill="#000"/>
<rect x="903.6179999999999" y="551.1" width="3.55" height="14.80" fill="#ff0000"/>
<rect x="846.2346666666666" y="593.1" width="3.55" height="15.30" fill="#000"/>
<rect x="851.4513333333333" y="593.1" width="3.55" height="15.30" fill="#000"/>
<rect x="856.6679999999999" y="593.1" width="3.55" height="15.30" fill="#000"/>
<rect x="861.8846666666666" y="593.1" width="3.55" height="15.30" fill="#000"/>
<rect x="867.1013333333333" y="593.1" width="3.55" height="15.30" fill="#000"/>
<rect x="872.318" y="593.1" width="3.55" height="15.30" fill="#000"/>
<rect x="877.5346666666667" y="593.1" width="3.55" height="15.30" fill="#000"/>
<rect x="882.7513333333333" y="593.1" width="3.55" height="15.30" fill="#000"/>
<rect x="887.968" y="593.1" width="3.55" height="15.30" fill="#000"/>
<rect x="893.1846666666667" y="593.1" width="3.55" height="15.30" fill="#000"/>
<rect x="898.4013333333332" y="593.1" width="3.55" height="15.30" fill="#000"/>
<rect x="903.6179999999999" y="593.1" width="3.55" height="15.30" fill="#000"/>
<rect x="727.5" y="639.4" width="14.90" height="24.80" fill="none" stroke="#1a1a1a" stroke-width="1.2"/>
<rect x="730.5" y="642.4" width="8.90" height="7.90" fill="#000"/>
<rect x="730.5" y="653.3" width="8.90" height="7.90" fill="#ff0000"/>
<rect x="723.5" y="670.6" width="22.90" height="43.30" fill="none" stroke="#1a1a1a" stroke-width="1.2"/>
<circle cx="735" cy="682" r="6.4" fill="#000"/>
<rect x="728.5" y="696" width="13.30" height="13.00" fill="#ff0000"/>
<rect x="647" y="666.6" width="6.00" height="40.20" fill="none" stroke="#1a1a1a" stroke-width="1.2"/>
<rect x="647.5" y="671" width="5.00" height="31.00" fill="#ff0000"/>
<rect x="647.6" y="708" width="20.80" height="40.80" fill="none" stroke="#1a1a1a" stroke-width="1.2"/>
<rect x="648.6" y="712.5" width="18.80" height="31.80" fill="#ff0000"/>
<rect x="827.5" y="656.4" width="21.00" height="40.90" fill="none" stroke="#1a1a1a" stroke-width="1.2"/>
<rect x="828.5" y="660.9" width="19.00" height="31.90" fill="#ff0000"/>
<rect x="878.8" y="661.4" width="20.80" height="41.10" fill="none" stroke="#1a1a1a" stroke-width="1.2"/>
<rect x="879.8" y="665.9" width="18.80" height="32.10" fill="#ff0000"/>
<rect x="842.8" y="697.3" width="20.60" height="40.90" fill="none" stroke="#1a1a1a" stroke-width="1.2"/>
<rect x="843.8" y="701.8" width="18.60" height="31.90" fill="#ff0000"/>
<rect x="877.6" y="721" width="14.60" height="25.20" fill="none" stroke="#1a1a1a" stroke-width="1.2"/>
<rect x="880.6" y="724" width="8.60" height="8.10" fill="#ff0000"/>
<rect x="880.6" y="735.1" width="8.60" height="8.10" fill="#000"/>
<rect x="897.2" y="719.8" width="15.40" height="22.40" fill="#000"/>
<path d="M901 724 h6 v4 h3 v5 h-3 v3 h-6 v-3 h-1.5 v-5 h1.5z" fill="#fff"/>
<rect x="898.5" y="734" width="4.00" height="7.00" fill="#ff0000"/>
<rect x="985.6" y="520.2" width="24.60" height="15.40" fill="none" stroke="#1a1a1a" stroke-width="1.2"/>
<rect x="988.6" y="523.2" width="7.80" height="9.40" fill="#ff0000"/>
<rect x="999.4000000000001" y="523.2" width="7.80" height="9.40" fill="#000"/>
<rect x="979" y="531.5" width="30.30" height="42.60" fill="none" stroke="#1a1a1a" stroke-width="1.2"/>
<rect x="984" y="538" width="6.00" height="9.00" fill="#000"/>
<rect x="984" y="560" width="6.00" height="8.00" fill="#000"/>
<rect x="992" y="538" width="6.00" height="9.00" fill="#000"/>
<rect x="992" y="560" width="6.00" height="8.00" fill="#000"/>
<rect x="1000" y="538" width="6.00" height="9.00" fill="#ff0000"/>
<rect x="1000" y="560" width="6.00" height="8.00" fill="#000"/>
<rect x="1013.8" y="544.3" width="45.60" height="62.90" fill="none" stroke="#1a1a1a" stroke-width="1.2"/>
<rect x="1015.922" y="544.5" width="3.96" height="14.90" fill="#000"/>
<rect x="1020.522" y="544.5" width="3.96" height="14.90" fill="#000"/>
<rect x="1025.1219999999998" y="544.5" width="3.96" height="14.90" fill="#000"/>
<rect x="1029.722" y="544.5" width="3.96" height="14.90" fill="#000"/>
<rect x="1034.322" y="544.5" width="3.96" height="14.90" fill="#000"/>
<rect x="1038.9219999999998" y="544.5" width="3.96" height="14.90" fill="#000"/>
<rect x="1043.522" y="544.5" width="3.96" height="14.90" fill="#000"/>
<rect x="1048.1219999999998" y="544.5" width="3.96" height="14.90" fill="#000"/>
<rect x="1052.722" y="544.5" width="3.96" height="14.90" fill="#ff0000"/>
<rect x="1015.96225" y="592.2" width="4.45" height="15.00" fill="#000"/>
<rect x="1021.13725" y="592.2" width="4.45" height="15.00" fill="#000"/>
<rect x="1026.31225" y="592.2" width="4.45" height="15.00" fill="#000"/>
<rect x="1031.48725" y="592.2" width="4.45" height="15.00" fill="#000"/>
<rect x="1036.6622499999999" y="592.2" width="4.45" height="15.00" fill="#000"/>
<rect x="1041.8372499999998" y="592.2" width="4.45" height="15.00" fill="#000"/>
<rect x="1047.01225" y="592.2" width="4.45" height="15.00" fill="#000"/>
<rect x="1052.18725" y="592.2" width="4.45" height="15.00" fill="#000"/>
<rect x="1059.4" y="553.8" width="20.10" height="40.90" fill="none" stroke="#1a1a1a" stroke-width="1.2"/>
<rect x="1060.4" y="558.3" width="18.10" height="31.90" fill="#ff0000"/>
<rect x="986.1" y="578.1" width="22.50" height="43.30" fill="none" stroke="#1a1a1a" stroke-width="1.2"/>
<circle cx="997.4" cy="589.5" r="6.4" fill="#000"/>
<rect x="991" y="604" width="12.50" height="13.00" fill="#ff0000"/>
<rect x="1041.2" y="612.4" width="25.30" height="14.90" fill="none" stroke="#1a1a1a" stroke-width="1.2"/>
<rect x="1044.2" y="615.4" width="8.15" height="8.90" fill="#000"/>
<rect x="1055.35" y="615.4" width="8.15" height="8.90" fill="#ff0000"/>
<rect x="1092.5" y="574.6" width="24.80" height="14.60" fill="none" stroke="#1a1a1a" stroke-width="1.2"/>
<rect x="1095.5" y="577.6" width="7.90" height="8.60" fill="#000"/>
<rect x="1106.4" y="577.6" width="7.90" height="8.60" fill="#ff0000"/>
<circle cx="1100.3" cy="557.3" r="6.4" fill="#000"/>
<circle cx="1116.8" cy="557.3" r="6.4" fill="#000"/>
<circle cx="1092" cy="598.7" r="6.4" fill="#000"/>
<circle cx="1112.6" cy="598.7" r="6.4" fill="#000"/>
<circle cx="1165.8" cy="557.3" r="6.4" fill="#000"/>
<circle cx="1182.3" cy="557.3" r="6.4" fill="#ff0000"/>
<circle cx="1157.5" cy="577.6" r="6.4" fill="#000"/>
<circle cx="1174" cy="577.6" r="6.4" fill="#000"/>
<circle cx="1190.6" cy="577.6" r="6.4" fill="#000"/>
<circle cx="1169.8" cy="598.7" r="6.4" fill="#000"/>
<circle cx="1190.1" cy="598.7" r="6.4" fill="#000"/>
<rect x="1166.5" y="615.2" width="41.80" height="20.40" fill="none" stroke="#1a1a1a" stroke-width="1.2"/>
<rect x="1171.0" y="616.2" width="32.80" height="18.40" fill="#ff0000"/>
<rect x="1211.4" y="618.3" width="25.30" height="14.20" fill="none" stroke="#1a1a1a" stroke-width="1.2"/>
<rect x="1214.4" y="621.3" width="8.15" height="8.20" fill="#000"/>
<rect x="1225.5500000000002" y="621.3" width="8.15" height="8.20" fill="#ff0000"/>
<rect x="1263.4" y="556.6" width="25.30" height="14.80" fill="none" stroke="#1a1a1a" stroke-width="1.2"/>
<rect x="1266.4" y="559.6" width="8.15" height="8.80" fill="#ff0000"/>
<rect x="1277.5500000000002" y="559.6" width="8.15" height="8.80" fill="#000"/>
<rect x="1288.7" y="556.6" width="24.80" height="14.80" fill="none" stroke="#1a1a1a" stroke-width="1.2"/>
<rect x="1291.7" y="559.6" width="7.90" height="8.80" fill="#ff0000"/>
<rect x="1302.6" y="559.6" width="7.90" height="8.80" fill="#000"/>
<circle cx="1280" cy="599.6" r="6.6" fill="#ff0000"/>
<circle cx="1280" cy="620.4" r="6.6" fill="#000"/>
<circle cx="1300.5" cy="599.6" r="6.6" fill="#000"/>
<circle cx="1300.5" cy="620.4" r="6.6" fill="#000"/>
<circle cx="1321.2" cy="599.6" r="6.6" fill="#000"/>
<circle cx="1321.2" cy="620.4" r="6.6" fill="#000"/>
<circle cx="1341.8" cy="599.6" r="6.6" fill="#000"/>
<circle cx="1341.8" cy="620.4" r="6.6" fill="#000"/>
<circle cx="1362.5" cy="599.6" r="6.6" fill="#000"/>
<circle cx="1362.5" cy="620.4" r="6.6" fill="#000"/>
<rect x="1149.2" y="634.8" width="14.90" height="24.40" fill="none" stroke="#1a1a1a" stroke-width="1.2"/>
<rect x="1152.2" y="637.8" width="8.90" height="7.70" fill="#ff0000"/>
<rect x="1152.2" y="648.5" width="8.90" height="7.70" fill="#000"/>
<circle cx="1135" cy="656.1" r="6" fill="#000"/>
<rect x="1191.8" y="634.8" width="22.40" height="42.60" fill="none" stroke="#1a1a1a" stroke-width="1.2"/>
<circle cx="1202.8" cy="646.2" r="6.4" fill="#000"/>
<rect x="1196" y="660" width="13.00" height="13.00" fill="#ff0000"/>
<circle cx="1181.1" cy="656.1" r="7.5" fill="#000"/>
<rect x="1216.6" y="654.2" width="25.50" height="14.70" fill="none" stroke="#1a1a1a" stroke-width="1.2"/>
<rect x="1219.6" y="657.2" width="8.25" height="8.70" fill="#000"/>
<rect x="1230.85" y="657.2" width="8.25" height="8.70" fill="#ff0000"/>
<rect x="1257.5" y="654.2" width="25.70" height="14.70" fill="none" stroke="#1a1a1a" stroke-width="1.2"/>
<rect x="1260.5" y="657.2" width="8.35" height="8.70" fill="#ff0000"/>
<rect x="1271.85" y="657.2" width="8.35" height="8.70" fill="#000"/>
<rect x="1287.5" y="644" width="24.80" height="14.20" fill="none" stroke="#1a1a1a" stroke-width="1.2"/>
<rect x="1290.5" y="647" width="7.90" height="8.20" fill="#000"/>
<rect x="1301.4" y="647" width="7.90" height="8.20" fill="#ff0000"/>
<rect x="1300.5" y="658.9" width="46.10" height="63.10" fill="none" stroke="#1a1a1a" stroke-width="1.2"/>
<rect x="1302.86575" y="658.7" width="4.49" height="15.30" fill="#000"/>
<rect x="1308.0907499999998" y="658.7" width="4.49" height="15.30" fill="#000"/>
<rect x="1313.31575" y="658.7" width="4.49" height="15.30" fill="#000"/>
<rect x="1318.54075" y="658.7" width="4.49" height="15.30" fill="#000"/>
<rect x="1323.76575" y="658.7" width="4.49" height="15.30" fill="#000"/>
<rect x="1328.99075" y="658.7" width="4.49" height="15.30" fill="#000"/>
<rect x="1334.2157499999998" y="658.7" width="4.49" height="15.30" fill="#000"/>
<rect x="1339.44075" y="658.7" width="4.49" height="15.30" fill="#000"/>
<rect x="1302.86575" y="707.1" width="4.49" height="15.00" fill="#ff0000"/>
<rect x="1308.0907499999998" y="707.1" width="4.49" height="15.00" fill="#000"/>
<rect x="1313.31575" y="707.1" width="4.49" height="15.00" fill="#000"/>
<rect x="1318.54075" y="707.1" width="4.49" height="15.00" fill="#000"/>
<rect x="1323.76575" y="707.1" width="4.49" height="15.00" fill="#000"/>
<rect x="1328.99075" y="707.1" width="4.49" height="15.00" fill="#000"/>
<rect x="1334.2157499999998" y="707.1" width="4.49" height="15.00" fill="#000"/>
<rect x="1339.44075" y="707.1" width="4.49" height="15.00" fill="#000"/>
<rect x="1130.8" y="682.1" width="41.60" height="20.10" fill="none" stroke="#1a1a1a" stroke-width="1.2"/>
<rect x="1135.3" y="683.1" width="32.60" height="18.10" fill="#ff0000"/>
<rect x="1221.3" y="672.4" width="17.20" height="35.00" fill="none" stroke="#1a1a1a" stroke-width="1.2"/>
<rect x="1223.6" y="675" width="2.55" height="8.00" fill="#000"/>
<rect x="1227.35" y="675" width="2.55" height="8.00" fill="#000"/>
<rect x="1231.1" y="675" width="2.55" height="8.00" fill="#000"/>
<rect x="1234.85" y="675" width="2.55" height="8.00" fill="#ff0000"/>
<rect x="1223.6" y="697" width="2.55" height="8.00" fill="#000"/>
<rect x="1227.35" y="697" width="2.55" height="8.00" fill="#000"/>
<rect x="1231.1" y="697" width="2.55" height="8.00" fill="#000"/>
<rect x="1234.85" y="697" width="2.55" height="8.00" fill="#000"/>
<rect x="1262.2" y="672.4" width="17.50" height="35.00" fill="none" stroke="#1a1a1a" stroke-width="1.2"/>
<rect x="1264.6" y="675" width="2.55" height="8.00" fill="#000"/>
<rect x="1268.35" y="675" width="2.55" height="8.00" fill="#000"/>
<rect x="1272.1" y="675" width="2.55" height="8.00" fill="#000"/>
<rect x="1275.85" y="675" width="2.55" height="8.00" fill="#000"/>
<rect x="1264.6" y="697" width="2.55" height="8.00" fill="#ff0000"/>
<rect x="1268.35" y="697" width="2.55" height="8.00" fill="#000"/>
<rect x="1272.1" y="697" width="2.55" height="8.00" fill="#000"/>
<rect x="1275.85" y="697" width="2.55" height="8.00" fill="#000"/>
<rect x="1215.4" y="710.3" width="25.30" height="14.90" fill="none" stroke="#1a1a1a" stroke-width="1.2"/>
<rect x="1218.4" y="713.3" width="8.15" height="8.90" fill="#000"/>
<rect x="1229.5500000000002" y="713.3" width="8.15" height="8.90" fill="#ff0000"/>
<rect x="1257.5" y="710.3" width="25.70" height="14.90" fill="none" stroke="#1a1a1a" stroke-width="1.2"/>
<rect x="1260.5" y="713.3" width="8.35" height="8.90" fill="#ff0000"/>
<rect x="1271.85" y="713.3" width="8.35" height="8.90" fill="#000"/>
<rect x="1349.7" y="695.6" width="15.10" height="25.30" fill="none" stroke="#1a1a1a" stroke-width="1.2"/>
<rect x="1352.7" y="698.6" width="9.10" height="8.15" fill="#ff0000"/>
<rect x="1352.7" y="709.75" width="9.10" height="8.15" fill="#000"/>
<rect x="1293.9" y="731" width="25.00" height="14.70" fill="none" stroke="#1a1a1a" stroke-width="1.2"/>
<rect x="1296.9" y="734" width="8.00" height="8.70" fill="#ff0000"/>
<rect x="1307.9" y="734" width="8.00" height="8.70" fill="#000"/>
<rect x="1323.4" y="731" width="25.10" height="14.70" fill="none" stroke="#1a1a1a" stroke-width="1.2"/>
<rect x="1326.4" y="734" width="8.05" height="8.70" fill="#000"/>
<rect x="1337.45" y="734" width="8.05" height="8.70" fill="#ff0000"/>
<rect x="1308.3" y="746.4" width="25.30" height="14.20" fill="none" stroke="#1a1a1a" stroke-width="1.2"/>
<rect x="1311.3" y="749.4" width="8.15" height="8.20" fill="#000"/>
<rect x="1322.4499999999998" y="749.4" width="8.15" height="8.20" fill="#ff0000"/>
<rect x="1408" y="635.8" width="14.00" height="40.90" fill="none" stroke="#1a1a1a" stroke-width="1.2"/>
<rect x="1409" y="640" width="13.00" height="32.00" fill="#ff0000"/>
<path d="M1419 677 V692" stroke="#1a1a1a" stroke-width="1.2"/>
<path d="M1419 700 V717" stroke="#1a1a1a" stroke-width="1.2"/>
<rect x="1151" y="711.7" width="16.30" height="22.70" fill="#000"/>
<path d="M1154 719 h4 v-4 h4 v4 h3 v6 h-3 v6 h-4 v-6 h-4z" fill="#fff"/>
<rect x="1162" y="713" width="4.00" height="7.00" fill="#ff0000"/>
<rect x="1170.1" y="715.4" width="14.50" height="24.90" fill="none" stroke="#1a1a1a" stroke-width="1.2"/>
<rect x="1173.1" y="718.4" width="8.50" height="7.95" fill="#000"/>
<rect x="1173.1" y="729.3499999999999" width="8.50" height="7.95" fill="#ff0000"/>
<rect x="1146.7" y="738.1" width="20.60" height="41.20" fill="none" stroke="#1a1a1a" stroke-width="1.2"/>
<rect x="1147.7" y="742.6" width="18.60" height="32.20" fill="#ff0000"/>
<rect x="1097.9" y="766.3" width="14.80" height="24.90" fill="none" stroke="#1a1a1a" stroke-width="1.2"/>
<rect x="1100.9" y="769.3" width="8.80" height="7.95" fill="#000"/>
<rect x="1100.9" y="780.25" width="8.80" height="7.95" fill="#ff0000"/>
<rect x="1119.2" y="772.3" width="24.90" height="14.60" fill="none" stroke="#1a1a1a" stroke-width="1.2"/>
<rect x="1122.2" y="775.3" width="7.95" height="8.60" fill="#ff0000"/>
<rect x="1133.15" y="775.3" width="7.95" height="8.60" fill="#000"/>
<rect x="1002.2" y="790.3" width="76.20" height="79.10" fill="none" stroke="#1a1a1a" stroke-width="1.2"/>
<circle cx="1058.5" cy="804.8" r="8.5" fill="#000"/>
<rect x="1029" y="810.9" width="7.50" height="14.10" fill="#000"/>
<rect x="1038" y="810.9" width="5.00" height="14.10" fill="#000"/>
<rect x="1044.5" y="810.9" width="7.50" height="14.10" fill="#ff0000"/>
<rect x="1029" y="835.6" width="7.50" height="14.30" fill="#000"/>
<rect x="1038" y="835.6" width="5.00" height="14.30" fill="#000"/>
<rect x="1044.5" y="835.6" width="7.50" height="14.30" fill="#000"/>
<rect x="1116.4" y="790.3" width="32.00" height="32.30" fill="none" stroke="#1a1a1a" stroke-width="1.2"/>
<rect x="1125" y="792" width="2.50" height="7.00" fill="#000"/>
<rect x="1125" y="814" width="2.50" height="7.00" fill="#000"/>
<rect x="1118" y="798" width="7.00" height="2.50" fill="#000"/>
<rect x="1140" y="798" width="7.00" height="2.50" fill="#000"/>
<rect x="1130" y="792" width="2.50" height="7.00" fill="#000"/>
<rect x="1130" y="814" width="2.50" height="7.00" fill="#000"/>
<rect x="1118" y="803" width="7.00" height="2.50" fill="#000"/>
<rect x="1140" y="803" width="7.00" height="2.50" fill="#000"/>
<rect x="1135" y="792" width="2.50" height="7.00" fill="#000"/>
<rect x="1135" y="814" width="2.50" height="7.00" fill="#000"/>
<rect x="1118" y="808" width="7.00" height="2.50" fill="#000"/>
<rect x="1140" y="808" width="7.00" height="2.50" fill="#000"/>
<rect x="1140" y="792" width="2.50" height="7.00" fill="#ff0000"/>
<rect x="1140" y="814" width="2.50" height="7.00" fill="#000"/>
<rect x="1118" y="813" width="7.00" height="2.50" fill="#000"/>
<rect x="1140" y="813" width="7.00" height="2.50" fill="#000"/>
<circle cx="1132.6" cy="806.4" r="4.5" fill="#000"/>
<rect x="1150" y="782.5" width="25.10" height="14.80" fill="none" stroke="#1a1a1a" stroke-width="1.2"/>
<rect x="1153" y="785.5" width="8.05" height="8.80" fill="#ff0000"/>
<rect x="1164.05" y="785.5" width="8.05" height="8.80" fill="#000"/>
<rect x="1150" y="797.3" width="25.10" height="15.80" fill="none" stroke="#1a1a1a" stroke-width="1.2"/>
<rect x="1153" y="800.3" width="8.05" height="9.80" fill="#ff0000"/>
<rect x="1164.05" y="800.3" width="8.05" height="9.80" fill="#000"/>
<rect x="1119.2" y="823.7" width="14.70" height="24.50" fill="none" stroke="#1a1a1a" stroke-width="1.2"/>
<rect x="1122.2" y="826.7" width="8.70" height="7.75" fill="#000"/>
<rect x="1122.2" y="837.45" width="8.70" height="7.75" fill="#ff0000"/>
<rect x="1133.9" y="823.7" width="15.20" height="24.50" fill="none" stroke="#1a1a1a" stroke-width="1.2"/>
<rect x="1136.9" y="826.7" width="9.20" height="7.75" fill="#000"/>
<rect x="1136.9" y="837.45" width="9.20" height="7.75" fill="#ff0000"/>
<rect x="1084.5" y="856.8" width="21.00" height="41.20" fill="none" stroke="#1a1a1a" stroke-width="1.2"/>
<rect x="1085.5" y="861.3" width="19.00" height="32.20" fill="#ff0000"/>
<rect x="1108.3" y="864.4" width="14.60" height="24.50" fill="none" stroke="#1a1a1a" stroke-width="1.2"/>
<rect x="1111.3" y="867.4" width="8.60" height="7.75" fill="#ff0000"/>
<rect x="1111.3" y="878.15" width="8.60" height="7.75" fill="#000"/>
<path d="M1422 762.5 H1178 V898.3 H1422" fill="none" stroke="#1a1a1a" stroke-width="1.2"/>
<circle cx="1197.7" cy="777.7" r="10.4" fill="#000"/>
<circle cx="1197.7" cy="883.1" r="10.4" fill="#000"/>
<rect x="909.5" y="857.1" width="21.30" height="41.20" fill="none" stroke="#1a1a1a" stroke-width="1.2"/>
<rect x="910.5" y="861.6" width="19.30" height="32.20" fill="#ff0000"/>
<rect x="950.5" y="857.1" width="21.30" height="41.20" fill="none" stroke="#1a1a1a" stroke-width="1.2"/>
<rect x="951.5" y="861.6" width="19.30" height="32.20" fill="#ff0000"/>
<rect x="976.4" y="857.1" width="21.60" height="41.20" fill="none" stroke="#1a1a1a" stroke-width="1.2"/>
<rect x="977.4" y="861.6" width="19.60" height="32.20" fill="#ff0000"/>
<text x="1261.3" y="458.3" font-size="13" text-anchor="middle">C2</text>
<text x="1157" y="762" font-size="8" text-anchor="middle">TP24</text>
</g></svg>

</body></html>
